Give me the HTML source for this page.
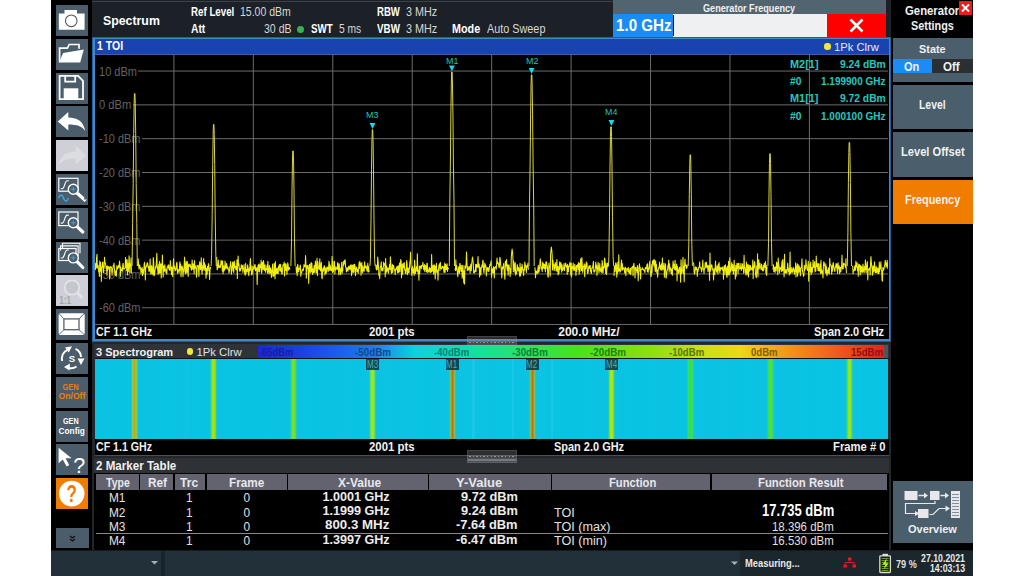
<!DOCTYPE html>
<html><head><meta charset="utf-8"><style>
html,body{margin:0;padding:0;background:#fff;width:1024px;height:576px;overflow:hidden}
body{position:relative;font-family:"Liberation Sans",sans-serif}
.r{position:absolute;overflow:visible}
.t{position:absolute;white-space:pre;transform-origin:0 0;font-family:"Liberation Sans",sans-serif}
svg.r text{font-family:"Liberation Sans",sans-serif}
</style></head><body>
<div class="r" style="left:51px;top:0px;width:922px;height:576px;background:#000;"></div>
<div class="r" style="left:92px;top:0px;width:799px;height:37px;background:#1b2126;"></div>
<div class="r" style="left:92px;top:1px;width:521px;height:1px;background:#3a4448;"></div>
<div class="r" style="left:56px;top:5px;width:32px;height:31px;background:#4b5c6a;"></div>
<div class="r" style="left:56px;top:39px;width:32px;height:31px;background:#4b5c6a;"></div>
<div class="r" style="left:56px;top:73px;width:32px;height:31px;background:#4b5c6a;"></div>
<div class="r" style="left:56px;top:106px;width:32px;height:31px;background:#4b5c6a;"></div>
<div class="r" style="left:56px;top:140px;width:32px;height:31px;background:#cfd0d7;"></div>
<div class="r" style="left:56px;top:174px;width:32px;height:31px;background:#4b5c6a;"></div>
<div class="r" style="left:56px;top:208px;width:32px;height:31px;background:#4b5c6a;"></div>
<div class="r" style="left:56px;top:242px;width:32px;height:31px;background:#4b5c6a;"></div>
<div class="r" style="left:56px;top:275px;width:32px;height:31px;background:#cfd0d7;"></div>
<div class="r" style="left:56px;top:309px;width:32px;height:31px;background:#4b5c6a;"></div>
<div class="r" style="left:56px;top:343px;width:32px;height:31px;background:#4b5c6a;"></div>
<div class="r" style="left:56px;top:377px;width:32px;height:31px;background:#4b5c6a;"></div>
<div class="r" style="left:56px;top:411px;width:32px;height:31px;background:#4b5c6a;"></div>
<div class="r" style="left:56px;top:444px;width:32px;height:31px;background:#4b5c6a;"></div>
<div class="r" style="left:56px;top:478px;width:32px;height:31px;background:#f07c00;"></div>
<div class="r" style="left:56px;top:528px;width:33px;height:20px;background:#4b5c6a;"></div>
<svg class="r" style="left:56px;top:5px" width="32" height="31" viewBox="0 0 32 31"><path d="M8.5 5h12.5v3.5h7.6v16.2H2.8V8.5h5.7z" fill="#fff"/><circle cx="15.25" cy="15.8" r="5.8" fill="none" stroke="#555" stroke-width="1.1"/></svg>
<svg class="r" style="left:56px;top:39px" width="32" height="31" viewBox="0 0 32 31"><path d="M3.6 23.2V9.2h7.8l1.8-3.7h9.8v4.3" fill="none" stroke="#fff" stroke-width="1.7"/><path d="M3 23.6l4.1-9.6 20.7-3.6-3.6 13.2z" fill="#fff"/></svg>
<svg class="r" style="left:56px;top:73px" width="32" height="31" viewBox="0 0 32 31"><path d="M3.6 2.9h18.5l4.9 5v18.2H3.6z" fill="none" stroke="#fff" stroke-width="1.8"/><path d="M9.2 2.9v5.7h10v-5.7" fill="none" stroke="#fff" stroke-width="1.8"/><rect x="7.7" y="15.3" width="14.6" height="11" fill="#fff"/></svg>
<svg class="r" style="left:56px;top:106px" width="32" height="31" viewBox="0 0 32 31"><path d="M1.8 15.5l10.5-9.5v5.5c8 0 15 3 17 13.5-3-4.5-8-6.5-17-6.5v6z" fill="#fff"/></svg>
<svg class="r" style="left:56px;top:140px" width="32" height="31" viewBox="0 0 32 31"><path d="M30.2 15.5l-10.5-9.5v5.5c-8 0-15 3-17 13.5 3-4.5 8-6.5 17-6.5v6z" fill="#dcdde0"/></svg>
<svg class="r" style="left:56px;top:174px" width="32" height="31" viewBox="0 0 32 31"><rect x="2.8" y="4.3" width="19.2" height="12.9" fill="none" stroke="#fff" stroke-width="1.2"/><path d="M4.8 14.8h1.5c2.5 0 2-8 5-8h1.5" fill="none" stroke="#fff" stroke-width="1.1"/><path d="M20.8 18.7L26.8 24.2" stroke="#fff" stroke-width="3.2" stroke-linecap="round"/><circle cx="17.3" cy="15.2" r="5.0" fill="#4b5c6a" stroke="#fff" stroke-width="1.4"/><path d="M17.3 12.7v5M14.8 15.2h5" stroke="#3aa6e0" stroke-width="1"/><path d="M2.5 24c1.7-4 3.5-4 5 0s3.5 4 5 0" fill="none" stroke="#3aa6e0" stroke-width="1.5"/><path d="M26 25.5h5l-2.5 2.5z" fill="#fff"/></svg>
<svg class="r" style="left:56px;top:208px" width="32" height="31" viewBox="0 0 32 31"><rect x="2.8" y="4.0" width="19.2" height="13.6" fill="none" stroke="#fff" stroke-width="1.2"/><path d="M4.8 15.1h1.5c2.5 0 2-8 5-8h1.5" fill="none" stroke="#fff" stroke-width="1.1"/><path d="M20.8 18.3L26.8 24.0" stroke="#fff" stroke-width="3.2" stroke-linecap="round"/><circle cx="17.3" cy="14.8" r="5.0" fill="#4b5c6a" stroke="#fff" stroke-width="1.4"/><path d="M17.3 12.3v5M14.8 14.8h5" stroke="#3aa6e0" stroke-width="1"/></svg>
<svg class="r" style="left:56px;top:242px" width="32" height="31" viewBox="0 0 32 31"><path d="M6.5 6.5V1.3h17.5v10" fill="none" stroke="#fff" stroke-width="1.1"/><path d="M4.6 8.5V3.9h17.5v10" fill="none" stroke="#fff" stroke-width="1.1"/><rect x="2.8" y="6.5" width="17.2" height="12.0" fill="none" stroke="#fff" stroke-width="1.2"/><path d="M4.8 16.0h1.5c2.5 0 2-8 5-8h1.5" fill="none" stroke="#fff" stroke-width="1.1"/><path d="M20.8 19.4L26.8 25.5" stroke="#fff" stroke-width="3.2" stroke-linecap="round"/><circle cx="17.3" cy="15.9" r="5.0" fill="#4b5c6a" stroke="#fff" stroke-width="1.4"/><path d="M17.3 13.4v5M14.8 15.9h5" stroke="#3aa6e0" stroke-width="1"/></svg>
<svg class="r" style="left:56px;top:275px" width="32" height="31" viewBox="0 0 32 31"><circle cx="16" cy="12.5" r="7.2" fill="#c6c7ce" stroke="#e2e3e8" stroke-width="1.8"/><path d="M21 17.5l5.5 5.5" stroke="#e2e3e8" stroke-width="3"/><text x="3.2" y="28.5" textLength="11.8" lengthAdjust="spacingAndGlyphs" font-family="Liberation Sans" font-weight="bold" font-size="10.5" fill="#a4a5ac">1:1</text></svg>
<svg class="r" style="left:56px;top:309px" width="32" height="31" viewBox="0 0 32 31"><rect x="2.6" y="4.25" width="26.1" height="21.75" rx="2" fill="#fff"/><rect x="7.9" y="9.9" width="15.1" height="10.8" fill="#fff" stroke="#56626c" stroke-width="1.3"/><path d="M3.5 5l4.4 4.9M27.8 5l-4.8 4.9M3.5 25.2l4.4-4.5M27.8 25.2l-4.8-4.5" stroke="#56626c" stroke-width="0.9"/></svg>
<svg class="r" style="left:56px;top:343px" width="32" height="31" viewBox="0 0 32 31"><path d="M6.2 18A9.5 9.5 0 0 1 11.5 6.8" fill="none" stroke="#fff" stroke-width="2"/><path d="M9 4.5l7-1.2-3.2 6.2z" fill="#fff"/><path d="M19.5 5.8A9.5 9.5 0 0 1 25 14" fill="none" stroke="#fff" stroke-width="2"/><path d="M21.5 15.5h7l-3.5 6.5z" fill="#fff"/><path d="M20.5 23.5A9.5 9.5 0 0 1 13 25" fill="none" stroke="#fff" stroke-width="2"/><path d="M14 20.5l-0.5 7-5.5-3.5z" fill="#fff"/><text x="15.8" y="19.3" text-anchor="middle" font-family="Liberation Sans" font-weight="bold" font-size="9.5" fill="#fff">S</text></svg>
<svg class="r" style="left:56px;top:377px" width="32" height="31" viewBox="0 0 32 31"><text x="6.4" y="12.9" textLength="16.2" lengthAdjust="spacingAndGlyphs" font-family="Liberation Sans" font-weight="bold" font-size="8.8" fill="#f07c00">GEN</text><text x="2.6" y="22.4" textLength="26.7" lengthAdjust="spacingAndGlyphs" font-family="Liberation Sans" font-weight="bold" font-size="8.4" fill="#f07c00">On/Off</text></svg>
<svg class="r" style="left:56px;top:411px" width="32" height="31" viewBox="0 0 32 31"><text x="7" y="12.9" textLength="15.6" lengthAdjust="spacingAndGlyphs" font-family="Liberation Sans" font-weight="bold" font-size="9.4" fill="#fff">GEN</text><text x="2.6" y="23.4" textLength="26.2" lengthAdjust="spacingAndGlyphs" font-family="Liberation Sans" font-weight="bold" font-size="9.4" fill="#fff">Config</text></svg>
<svg class="r" style="left:56px;top:444px" width="32" height="31" viewBox="0 0 32 31"><path d="M2.6 3.7v15.5l4.2-3.8 3.8 7 2.6-1.4-3.6-6.8h6z" fill="#fff"/><text x="17.3" y="28.6" textLength="12" lengthAdjust="spacingAndGlyphs" font-family="Liberation Sans" font-size="22" fill="#fff">?</text></svg>
<svg class="r" style="left:56px;top:478px" width="32" height="31" viewBox="0 0 32 31"><circle cx="15.7" cy="15.6" r="12.8" fill="#fff"/><text x="10.5" y="24.3" textLength="10.4" lengthAdjust="spacingAndGlyphs" font-family="Liberation Sans" font-weight="bold" font-size="23.5" fill="#f07c00">?</text></svg>
<svg class="r" style="left:56px;top:528px" width="33" height="20" viewBox="0 0 33 20"><path d="M14 8l2.5 2 2.5-2M14 11l2.5 2 2.5-2" fill="none" stroke="#111" stroke-width="1.3"/></svg>
<div class="t" style="left:102.70px;top:15px;font-size:12.46px;line-height:12.46px;color:#ffffff;font-weight:bold;transform:scaleX(0.990);">Spectrum</div>
<div class="t" style="left:190.80px;top:6px;font-size:12.46px;line-height:12.46px;color:#ffffff;font-weight:bold;transform:scaleX(0.782);">Ref Level</div>
<div class="t" style="left:240.40px;top:6px;font-size:12.46px;line-height:12.46px;color:#d8d8d8;transform:scaleX(0.843);">15.00 dBm</div>
<div class="t" style="left:190.80px;top:24px;font-size:11.88px;line-height:11.88px;color:#ffffff;font-weight:bold;transform:scaleX(0.866);">Att</div>
<div class="t" style="left:263.70px;top:24px;font-size:11.88px;line-height:11.88px;color:#d8d8d8;transform:scaleX(0.886);">30 dB</div>
<div class="r" style="left:297px;top:25.5px;width:7px;height:7px;border-radius:50%;background:#3cae55"></div>
<div class="t" style="left:310.50px;top:24px;font-size:11.88px;line-height:11.88px;color:#ffffff;font-weight:bold;transform:scaleX(0.821);">SWT</div>
<div class="t" style="left:338.90px;top:24px;font-size:11.88px;line-height:11.88px;color:#d8d8d8;transform:scaleX(0.863);">5 ms</div>
<div class="t" style="left:376.60px;top:6px;font-size:12.46px;line-height:12.46px;color:#ffffff;font-weight:bold;transform:scaleX(0.770);">RBW</div>
<div class="t" style="left:405.90px;top:6px;font-size:12.46px;line-height:12.46px;color:#d8d8d8;transform:scaleX(0.869);">3 MHz</div>
<div class="t" style="left:376.60px;top:24px;font-size:11.88px;line-height:11.88px;color:#ffffff;font-weight:bold;transform:scaleX(0.826);">VBW</div>
<div class="t" style="left:405.90px;top:24px;font-size:11.88px;line-height:11.88px;color:#d8d8d8;transform:scaleX(0.912);">3 MHz</div>
<div class="t" style="left:452.00px;top:24px;font-size:11.88px;line-height:11.88px;color:#ffffff;font-weight:bold;transform:scaleX(0.909);">Mode</div>
<div class="t" style="left:486.50px;top:24px;font-size:11.88px;line-height:11.88px;color:#d8d8d8;transform:scaleX(0.912);">Auto Sweep</div>
<div class="r" style="left:613px;top:0px;width:273px;height:14px;background:#526470;"></div>
<div class="t" style="left:703.00px;top:4px;font-size:10.14px;line-height:10.14px;color:#f0f0f0;font-weight:bold;transform:scaleX(0.900);">Generator Frequency</div>
<div class="r" style="left:613px;top:14px;width:214px;height:23px;background:#eef0f2;"></div>
<div class="r" style="left:613px;top:14px;width:60px;height:23px;background:#1a8cf5;"></div>
<div class="r" style="left:672.5px;top:15px;width:1.5px;height:21px;background:#000;"></div>
<div class="t" style="left:615.60px;top:18px;font-size:15.94px;line-height:15.94px;color:#ffffff;font-weight:bold;transform:scaleX(0.950);">1.0 GHz</div>
<div class="r" style="left:827px;top:14px;width:59px;height:23px;background:#ff0000;"></div>
<svg class="r" style="left:827px;top:14px" width="59" height="23" viewBox="0 0 59 23"><path d="M23.5 5.5l12 12M35.5 5.5l-12 12" stroke="#fff" stroke-width="2.6"/></svg>
<div class="t" style="left:905.00px;top:5px;font-size:12.46px;line-height:12.46px;color:#f0f0f0;font-weight:bold;transform:scaleX(0.911);">Generator</div>
<div class="t" style="left:910.60px;top:20px;font-size:12.75px;line-height:12.75px;color:#f0f0f0;font-weight:bold;transform:scaleX(0.852);">Settings</div>
<div class="r" style="left:959px;top:1px;width:13px;height:14px;background:#ee1c1c;"></div>
<svg class="r" style="left:959px;top:1px" width="13" height="14" viewBox="0 0 13 14"><path d="M3 3.5l7 7M10 3.5l-7 7" stroke="#fff" stroke-width="1.8"/></svg>
<div class="r" style="left:893px;top:38px;width:80px;height:44px;background:#4a5e6c;"></div>
<div class="t" style="left:919.00px;top:44px;font-size:11.30px;line-height:11.30px;color:#f0f0f0;font-weight:bold;transform:scaleX(0.964);">State</div>
<div class="r" style="left:893px;top:59px;width:39px;height:14px;background:#1a8cf5;"></div>
<div class="r" style="left:932px;top:59px;width:41px;height:14px;background:#2a2f34;"></div>
<div class="t" style="left:904.30px;top:61px;font-size:12.32px;line-height:12.32px;color:#f0f0f0;font-weight:bold;transform:scaleX(0.895);">On</div>
<div class="t" style="left:943.40px;top:61px;font-size:12.32px;line-height:12.32px;color:#f0f0f0;font-weight:bold;transform:scaleX(0.939);">Off</div>
<div class="r" style="left:893px;top:85px;width:80px;height:44px;background:#4a5e6c;"></div>
<div class="t" style="left:919.00px;top:99px;font-size:12.61px;line-height:12.61px;color:#f0f0f0;font-weight:bold;transform:scaleX(0.826);">Level</div>
<div class="r" style="left:893px;top:132px;width:80px;height:45px;background:#4a5e6c;"></div>
<div class="t" style="left:900.80px;top:146px;font-size:12.32px;line-height:12.32px;color:#f0f0f0;font-weight:bold;transform:scaleX(0.903);">Level Offset</div>
<div class="r" style="left:893px;top:180px;width:80px;height:44px;background:#f07c00;"></div>
<div class="t" style="left:905.00px;top:194px;font-size:12.17px;line-height:12.17px;color:#f8f0e8;font-weight:bold;transform:scaleX(0.899);">Frequency</div>
<div class="r" style="left:893px;top:481px;width:80px;height:62px;background:#4a5e6c;"></div>
<div class="t" style="left:908.00px;top:524px;font-size:11.30px;line-height:11.30px;color:#f0f0f0;font-weight:bold;transform:scaleX(0.972);">Overview</div>
<svg class="r" style="left:893px;top:481px" width="80" height="62" viewBox="0 0 80 62">
<rect x="11.5" y="10" width="13" height="9" fill="#e8e8ec"/>
<path d="M25.5 14.5h7" stroke="#e8e8ec" stroke-width="1.5"/><path d="M31 11.5l4 3-4 3z" fill="#e8e8ec"/>
<rect x="37" y="10" width="9.5" height="9" fill="#e8e8ec"/>
<path d="M47.5 14.5h6" stroke="#e8e8ec" stroke-width="1.5"/><path d="M52 11.5l4 3-4 3z" fill="#e8e8ec"/>
<rect x="58" y="10" width="9" height="27" fill="#e8e8ec"/>
<path d="M59 13.5h7M59 16.5h7M59 19.5h7M59 22.5h7M59 25.5h7M59 28.5h7M59 31.5h7M59 34.5h7" stroke="#6a7680" stroke-width="0.8"/>
<path d="M42 20v2.5H12.5v10h10" fill="none" stroke="#e8e8ec" stroke-width="1.2"/><path d="M22 30l4.5 2.5-4.5 2.5z" fill="#e8e8ec"/>
<rect x="25" y="28" width="10.5" height="9" fill="#e8e8ec"/>
<path d="M36.5 33.5h3.5l6-6h7.5" fill="none" stroke="#e8e8ec" stroke-width="1.2"/><path d="M52.5 24.5l4.5 3-4.5 3z" fill="#e8e8ec"/>
</svg>
<div class="r" style="left:51px;top:550px;width:922px;height:26px;background:#22303a;"></div>
<div class="r" style="left:161px;top:550px;width:4px;height:26px;background:#18232a;"></div>
<div class="r" style="left:740px;top:550px;width:233px;height:26px;background:#1c262d;"></div>
<div class="r" style="left:51px;top:550px;width:922px;height:1px;background:#141a1e;"></div>
<svg class="r" style="left:150px;top:559px" width="10" height="8"><path d="M1 2h7l-3.5 3.5z" fill="#aab0b5"/></svg>
<svg class="r" style="left:729.5px;top:560px" width="10" height="8"><path d="M1 1.5h7l-3.5 3.5z" fill="#aab0b5"/></svg>
<div class="t" style="left:744.80px;top:559px;font-size:10.43px;line-height:10.43px;color:#e8e8e8;font-weight:bold;transform:scaleX(0.898);">Measuring...</div>
<svg class="r" style="left:842px;top:556px" width="16" height="13" viewBox="0 0 16 13">
<rect x="6" y="1.5" width="3.5" height="3" fill="#e81818"/><rect x="1.5" y="8.5" width="3.5" height="3" fill="#e81818"/><rect x="10.5" y="8.5" width="3.5" height="3" fill="#e81818"/>
<path d="M7.75 4.5v2M3.25 8.5V6.5h9v2" fill="none" stroke="#e81818" stroke-width="1"/></svg>
<svg class="r" style="left:878px;top:553px" width="14" height="21" viewBox="0 0 14 21">
<rect x="4.5" y="0.8" width="5.5" height="2.2" fill="#e0e0e0"/>
<rect x="1.8" y="2.9" width="10.6" height="16.6" rx="0.8" fill="#14200c" stroke="#d8d8d8" stroke-width="1.3"/>
<path d="M3.5 5.5h7M3.5 7.5h7M3.5 9.5h7M3.5 11.5h7M3.5 13.5h7M3.5 15.5h7M3.5 17.5h7" stroke="#5a9a18" stroke-width="1.1"/>
<path d="M8.8 5.2l-4.3 6.3h2.8l-1.6 5.3 4.8-6.6h-2.9z" fill="#c0f030"/></svg>
<div class="t" style="left:896.00px;top:559px;font-size:10.87px;line-height:10.87px;color:#e0e0e0;font-weight:bold;transform:scaleX(0.837);">79 %</div>
<div class="t" style="left:921.00px;top:554px;font-size:10.14px;line-height:10.14px;color:#e8e8e8;font-weight:bold;transform:scaleX(0.866);">27.10.2021</div>
<div class="t" style="left:930.30px;top:564px;font-size:10.00px;line-height:10.00px;color:#e8e8e8;font-weight:bold;transform:scaleX(0.876);">14:03:13</div>
<div class="r" style="left:92px;top:37px;width:799px;height:305px;background:#2060a0;"></div>
<div class="r" style="left:93px;top:38px;width:797px;height:303px;background:#4288c8;"></div>
<div class="r" style="left:95px;top:39px;width:794px;height:15px;background:#1a43b2;"></div>
<div class="r" style="left:95px;top:53.6px;width:794px;height:1px;background:#4a5aa0;"></div>
<div class="r" style="left:95px;top:54.6px;width:794px;height:284px;background:#000;"></div>
<div class="t" style="left:97.20px;top:40px;font-size:12.75px;line-height:12.75px;color:#ffffff;font-weight:bold;transform:scaleX(0.825);">1 TOI</div>
<div class="r" style="left:824px;top:43.4px;width:6.5px;height:6.5px;border-radius:50%;background:#f2e83a"></div>
<div class="t" style="left:833.60px;top:42px;font-size:10.72px;line-height:10.72px;color:#e8e8f0;transform:scaleX(1.047);">1Pk Clrw</div>
<svg class="r" style="left:0;top:0" width="1024" height="576" viewBox="0 0 1024 576"><path d="M95.0 71.04H888.0" stroke="#6c6c6c" stroke-width="1"/><path d="M95.0 104.86H888.0" stroke="#6c6c6c" stroke-width="1"/><path d="M95.0 138.68H888.0" stroke="#6c6c6c" stroke-width="1"/><path d="M95.0 172.50H888.0" stroke="#6c6c6c" stroke-width="1"/><path d="M95.0 206.32H888.0" stroke="#6c6c6c" stroke-width="1"/><path d="M95.0 240.14H888.0" stroke="#6c6c6c" stroke-width="1"/><path d="M95.0 273.96H888.0" stroke="#6c6c6c" stroke-width="1"/><path d="M95.0 307.78H888.0" stroke="#6c6c6c" stroke-width="1"/><path d="M95.0 324.45H888.0" stroke="#6c6c6c" stroke-width="1"/><path d="M173.90 54.1V324.5" stroke="#6c6c6c" stroke-width="1"/><path d="M253.34 54.1V324.5" stroke="#6c6c6c" stroke-width="1"/><path d="M332.78 54.1V324.5" stroke="#6c6c6c" stroke-width="1"/><path d="M412.22 54.1V324.5" stroke="#6c6c6c" stroke-width="1"/><path d="M491.66 54.1V324.5" stroke="#6c6c6c" stroke-width="1"/><path d="M571.10 54.1V324.5" stroke="#6c6c6c" stroke-width="1"/><path d="M650.54 54.1V324.5" stroke="#6c6c6c" stroke-width="1"/><path d="M729.98 54.1V324.5" stroke="#6c6c6c" stroke-width="1"/><path d="M809.42 54.1V324.5" stroke="#6c6c6c" stroke-width="1"/></svg>
<div class="r" style="left:95px;top:66px;width:43px;height:10px;background:#000;"></div>
<div class="t" style="left:98.90px;top:65px;font-size:13.04px;line-height:13.04px;color:#626262;transform:scaleX(0.846);">10 dBm</div>
<div class="r" style="left:95px;top:100px;width:38px;height:10px;background:#000;"></div>
<div class="t" style="left:98.90px;top:98px;font-size:13.04px;line-height:13.04px;color:#626262;transform:scaleX(0.859);">0 dBm</div>
<div class="r" style="left:95px;top:134px;width:47px;height:10px;background:#000;"></div>
<div class="t" style="left:98.90px;top:132px;font-size:13.04px;line-height:13.04px;color:#626262;transform:scaleX(0.841);">-10 dBm</div>
<div class="r" style="left:95px;top:167px;width:47px;height:10px;background:#000;"></div>
<div class="t" style="left:98.90px;top:166px;font-size:13.04px;line-height:13.04px;color:#626262;transform:scaleX(0.841);">-20 dBm</div>
<div class="r" style="left:95px;top:201px;width:47px;height:10px;background:#000;"></div>
<div class="t" style="left:98.90px;top:200px;font-size:13.04px;line-height:13.04px;color:#626262;transform:scaleX(0.841);">-30 dBm</div>
<div class="r" style="left:95px;top:235px;width:47px;height:10px;background:#000;"></div>
<div class="t" style="left:98.90px;top:234px;font-size:13.04px;line-height:13.04px;color:#626262;transform:scaleX(0.841);">-40 dBm</div>
<div class="r" style="left:95px;top:269px;width:47px;height:10px;background:#000;"></div>
<div class="t" style="left:98.90px;top:268px;font-size:13.04px;line-height:13.04px;color:#626262;transform:scaleX(0.841);">-50 dBm</div>
<div class="r" style="left:95px;top:303px;width:47px;height:10px;background:#000;"></div>
<div class="t" style="left:98.90px;top:301px;font-size:13.04px;line-height:13.04px;color:#626262;transform:scaleX(0.841);">-60 dBm</div>
<svg class="r" style="left:0;top:0" width="1024" height="576" viewBox="0 0 1024 576"><clipPath id="dc"><rect x="95" y="54.5" width="793" height="270"/></clipPath><g clip-path="url(#dc)" fill="none" stroke-linejoin="round"><g stroke="#f0ee10" stroke-width="1.05"><polyline points="95.00,263.40 95.40,269.81 95.79,262.98 96.19,268.04 96.59,257.62 96.98,254.27 97.38,267.89 97.78,267.20 98.17,265.16 98.57,271.45 98.97,270.72 99.36,276.50 99.76,261.14 100.15,271.11 100.55,262.40 100.95,268.31 101.34,281.50 101.74,268.11 102.14,267.15 102.53,262.35 102.93,262.02 103.33,272.84 103.72,268.38 104.12,268.19 104.52,257.28 104.91,262.63 105.31,262.87 105.71,265.18 106.10,268.40 106.50,266.30 106.89,274.94 107.29,270.93 107.69,265.84 108.08,269.14 108.48,267.07 108.88,266.74 109.27,266.98 109.67,278.86 110.07,270.36 110.46,266.48 110.86,267.14 111.26,266.87 111.65,267.94 112.05,275.18 112.45,269.86 112.84,269.07 113.24,265.20 113.64,266.01 114.03,263.10 114.43,268.83 114.83,273.26 115.22,275.51 115.62,270.72 116.01,274.40 116.41,276.17 116.81,265.75 117.20,269.19 117.60,268.98 118.00,267.43 118.39,265.34 118.79,267.63 119.19,265.32 119.58,261.01 119.98,265.45 120.38,276.53 120.77,266.96 121.17,270.61 121.57,269.22 121.96,270.87 122.36,271.09 122.75,264.91 123.15,263.19 123.55,269.04 123.94,268.47 124.34,269.11 124.74,268.11 125.13,267.87 125.53,257.54 125.93,267.60 126.32,259.74 126.72,270.68 127.12,259.74 127.51,274.88 127.91,263.58 128.31,271.71 128.70,264.35 129.10,255.71 129.50,265.58 129.89,273.00 130.29,263.87 130.69,264.53 131.08,257.70 131.48,273.63"/><polyline points="137.82,265.94 138.22,258.80 138.62,265.24 139.01,269.28 139.41,265.01 139.80,264.98 140.20,268.47 140.60,267.81 140.99,274.37 141.39,269.92 141.79,268.50 142.18,267.54 142.58,275.74 142.98,269.46 143.37,273.69 143.77,269.94 144.17,264.22 144.56,262.29 144.96,269.72 145.36,279.92 145.75,267.74 146.15,265.85 146.55,266.72 146.94,263.71 147.34,262.74 147.73,263.10 148.13,267.94 148.53,266.22 148.92,271.58 149.32,266.21 149.72,271.08 150.11,259.10 150.51,270.09 150.91,274.44 151.30,267.74 151.70,265.59 152.10,273.21 152.49,267.60 152.89,274.95 153.29,257.44 153.68,261.80 154.08,275.84 154.47,274.90 154.87,271.11 155.27,268.82 155.66,266.16 156.06,267.03 156.46,260.75 156.85,253.22 157.25,268.75 157.65,266.69 158.04,274.56 158.44,271.14 158.84,264.04 159.23,273.14 159.63,261.20 160.03,273.08 160.42,267.34 160.82,263.69 161.22,278.03 161.61,264.27 162.01,267.89 162.41,254.95 162.80,268.64 163.20,277.04 163.59,265.87 163.99,271.28 164.39,271.35 164.78,264.84 165.18,268.81 165.58,270.18 165.97,272.71 166.37,269.17 166.77,274.33 167.16,266.93 167.56,267.01 167.96,265.27 168.35,268.10 168.75,264.72 169.15,269.80 169.54,269.75 169.94,270.58 170.33,260.63 170.73,266.86 171.13,269.01 171.52,274.83 171.92,266.90 172.32,271.49 172.71,276.66 173.11,268.21 173.51,258.85 173.90,265.23 174.30,268.82 174.70,266.29 175.09,270.96 175.49,268.60 175.89,270.24 176.28,267.91 176.68,262.22 177.08,263.56 177.47,273.23 177.87,269.48 178.26,269.85 178.66,270.33 179.06,273.06 179.45,267.74 179.85,261.69 180.25,269.91 180.64,264.08 181.04,276.80 181.44,269.71 181.83,266.20 182.23,266.12 182.63,269.78 183.02,276.72 183.42,269.12 183.82,271.91 184.21,263.97 184.61,256.91 185.01,267.99 185.40,273.91 185.80,264.81 186.19,261.23 186.59,273.06 186.99,269.04 187.38,261.53 187.78,271.60 188.18,276.36 188.57,264.70 188.97,264.02 189.37,266.47 189.76,265.16 190.16,264.41 190.56,267.48 190.95,266.26 191.35,270.15 191.75,268.08 192.14,260.05 192.54,267.01 192.94,269.58 193.33,263.77 193.73,266.83 194.12,274.00 194.52,260.54 194.92,268.37 195.31,267.09 195.71,265.90 196.11,268.73 196.50,277.30 196.90,271.77 197.30,265.18 197.69,266.10 198.09,265.27 198.49,267.09 198.88,276.38 199.28,268.56 199.68,261.72 200.07,263.81 200.47,269.77 200.87,267.77 201.26,257.65 201.66,269.81 202.06,274.22 202.45,265.84 202.85,270.51 203.24,263.33 203.64,258.54 204.04,269.04 204.43,262.74 204.83,270.39 205.23,264.67 205.62,266.24 206.02,278.18 206.42,268.15 206.81,274.68 207.21,273.84 207.61,266.28 208.00,270.76 208.40,263.55 208.80,265.21 209.19,268.37 209.59,279.47 209.99,269.67 210.38,268.65 210.78,266.97"/><polyline points="216.73,257.03 217.12,269.77 217.52,269.09 217.92,266.97 218.31,259.92 218.71,267.43 219.10,266.89 219.50,267.18 219.90,265.24 220.29,267.73 220.69,264.52 221.09,260.18 221.48,264.52 221.88,261.63 222.28,271.04 222.67,260.75 223.07,273.81 223.47,265.84 223.86,271.21 224.26,266.30 224.66,270.01 225.05,260.93 225.45,266.38 225.84,268.76 226.24,267.67 226.64,263.32 227.03,266.88 227.43,268.79 227.83,266.93 228.22,269.73 228.62,269.13 229.02,273.19 229.41,271.18 229.81,266.52 230.21,265.88 230.60,261.56 231.00,267.38 231.40,274.16 231.79,267.12 232.19,267.16 232.59,262.13 232.98,271.03 233.38,263.04 233.78,272.51 234.17,261.05 234.57,262.08 234.96,267.36 235.36,266.33 235.76,269.38 236.15,266.58 236.55,270.01 236.95,259.69 237.34,278.51 237.74,264.16 238.14,256.00 238.53,265.49 238.93,263.88 239.33,268.90 239.72,271.17 240.12,268.72 240.52,270.82 240.91,268.46 241.31,264.85 241.71,265.22 242.10,268.70 242.50,265.55 242.89,272.52 243.29,268.53 243.69,269.56 244.08,264.63 244.48,271.54 244.88,274.14 245.27,275.25 245.67,263.36 246.07,273.46 246.46,269.59 246.86,270.25 247.26,271.58 247.65,264.77 248.05,267.79 248.45,273.22 248.84,275.72 249.24,268.36 249.63,271.06 250.03,262.99 250.43,258.51 250.82,270.25 251.22,265.97 251.62,274.96 252.01,274.60 252.41,272.35 252.81,265.99 253.20,267.92 253.60,267.71 254.00,269.78 254.39,267.48 254.79,264.61 255.19,264.80 255.58,271.05 255.98,267.94 256.38,267.78 256.77,268.71 257.17,284.38 257.56,269.13 257.96,265.71 258.36,264.75 258.75,271.80 259.15,263.68 259.55,272.02 259.94,267.88 260.34,264.75 260.74,267.71 261.13,259.91 261.53,273.29 261.93,271.66 262.32,262.07 262.72,267.33 263.12,269.44 263.51,260.49 263.91,264.01 264.31,270.42 264.70,270.01 265.10,264.74 265.50,272.33 265.89,268.69 266.29,269.75 266.68,268.92 267.08,265.12 267.48,273.15 267.87,261.26 268.27,267.89 268.67,272.02 269.06,274.02 269.46,265.47 269.86,272.07 270.25,273.10 270.65,267.90 271.05,271.44 271.44,277.41 271.84,270.90 272.24,269.80 272.63,263.91 273.03,276.39 273.43,275.97 273.82,275.88 274.22,263.36 274.61,266.92 275.01,278.78 275.41,261.58 275.80,273.66 276.20,273.50 276.60,268.60 276.99,273.51 277.39,272.04 277.79,267.83 278.18,273.74 278.58,266.12 278.98,268.00 279.37,264.39 279.77,270.95 280.17,268.57 280.56,264.37 280.96,271.70 281.36,267.86 281.75,273.46 282.15,274.10 282.54,269.71 282.94,264.66 283.34,265.65 283.73,265.79 284.13,262.05 284.53,275.93 284.92,268.04 285.32,263.57 285.72,270.38 286.11,264.10 286.51,267.63 286.91,274.36 287.30,270.47 287.70,262.84 288.10,264.46 288.49,270.17 288.89,269.18 289.28,267.26 289.68,269.09 290.08,268.53"/><polyline points="296.03,266.26 296.42,272.78 296.82,267.66 297.22,275.84 297.61,264.32 298.01,265.55 298.40,271.89 298.80,270.99 299.20,268.22 299.59,269.23 299.99,267.42 300.39,264.99 300.78,276.23 301.18,272.39 301.58,272.93 301.97,270.80 302.37,269.65 302.77,269.13 303.16,270.69 303.56,269.27 303.96,264.56 304.35,265.86 304.75,266.76 305.14,266.70 305.54,255.61 305.94,263.74 306.33,278.29 306.73,267.65 307.13,265.56 307.52,268.41 307.92,265.30 308.32,271.62 308.71,283.39 309.11,268.31 309.51,264.36 309.90,270.47 310.30,272.91 310.70,264.49 311.09,262.44 311.49,271.73 311.89,263.29 312.28,271.50 312.68,274.48 313.07,268.70 313.47,272.59 313.87,269.05 314.26,265.46 314.66,272.36 315.06,266.03 315.45,261.01 315.85,264.72 316.25,272.95 316.64,268.82 317.04,258.27 317.44,275.44 317.83,261.48 318.23,266.40 318.63,267.86 319.02,269.39 319.42,265.20 319.82,258.88 320.21,269.75 320.61,271.00 321.00,265.26 321.40,262.16 321.80,277.96 322.19,278.68 322.59,270.53 322.99,268.11 323.38,271.18 323.78,269.02 324.18,265.67 324.57,266.19 324.97,275.09 325.37,268.13 325.76,268.20 326.16,273.37 326.56,271.77 326.95,266.73 327.35,267.43 327.75,267.57 328.14,271.72 328.54,269.62 328.94,261.27 329.33,263.80 329.73,270.46 330.12,265.03 330.52,266.84 330.92,270.39 331.31,269.10 331.71,270.96 332.11,256.33 332.50,272.43 332.90,261.26 333.30,272.07 333.69,268.18 334.09,269.07 334.49,261.20 334.88,273.95 335.28,266.82 335.68,270.07 336.07,268.93 336.47,268.17 336.87,267.05 337.26,269.41 337.66,262.56 338.05,263.50 338.45,270.51 338.85,275.07 339.24,263.85 339.64,270.60 340.04,267.88 340.43,274.72 340.83,269.21 341.23,271.41 341.62,262.23 342.02,273.55 342.42,270.90 342.81,270.61 343.21,261.64 343.61,265.37 344.00,264.00 344.40,260.43 344.79,263.31 345.19,259.67 345.59,267.13 345.98,267.02 346.38,271.96 346.78,269.75 347.17,267.86 347.57,270.61 347.97,271.26 348.36,267.37 348.76,266.28 349.16,269.37 349.55,269.17 349.95,266.26 350.35,265.08 350.74,269.87 351.14,264.82 351.54,275.42 351.93,272.32 352.33,265.05 352.73,270.06 353.12,272.44 353.52,264.89 353.91,272.28 354.31,264.42 354.71,264.30 355.10,267.07 355.50,275.72 355.90,269.24 356.29,267.70 356.69,266.94 357.09,271.83 357.48,269.32 357.88,270.99 358.28,273.31 358.67,268.33 359.07,262.51 359.47,268.53 359.86,261.30 360.26,265.49 360.65,263.54 361.05,275.15 361.45,266.25 361.84,262.56 362.24,271.30 362.64,273.00 363.03,266.06 363.43,270.70 363.83,268.55 364.22,271.32 364.62,261.82 365.02,268.12 365.41,267.75 365.81,266.42 366.21,265.93 366.60,268.59 367.00,271.19 367.40,269.31 367.79,263.35 368.19,272.27 368.58,266.63 368.98,271.49 369.38,270.75"/><polyline points="375.72,264.45 376.12,268.71 376.51,270.03 376.91,265.53 377.31,269.39 377.70,257.09 378.10,261.42 378.50,266.26 378.89,275.58 379.29,274.11 379.69,278.83 380.08,270.73 380.48,266.04 380.88,266.03 381.27,261.85 381.67,270.62 382.07,267.71 382.46,269.81 382.86,270.99 383.26,268.25 383.65,262.06 384.05,264.71 384.44,265.21 384.84,263.64 385.24,276.78 385.63,258.63 386.03,273.09 386.43,265.84 386.82,271.66 387.22,270.01 387.62,267.72 388.01,268.25 388.41,273.18 388.81,268.64 389.20,267.93 389.60,264.28 390.00,269.60 390.39,256.69 390.79,263.19 391.19,271.90 391.58,273.49 391.98,269.07 392.38,264.31 392.77,272.58 393.17,265.88 393.56,265.45 393.96,267.53 394.36,269.90 394.75,269.89 395.15,274.70 395.55,269.13 395.94,270.00 396.34,267.80 396.74,268.53 397.13,266.14 397.53,272.77 397.93,270.87 398.32,265.90 398.72,272.53 399.12,267.97 399.51,263.05 399.91,271.71 400.31,264.01 400.70,259.58 401.10,260.77 401.49,277.74 401.89,264.16 402.29,272.28 402.68,274.30 403.08,263.19 403.48,266.51 403.87,267.49 404.27,262.63 404.67,270.02 405.06,268.98 405.46,273.68 405.86,273.81 406.25,269.43 406.65,260.62 407.05,263.11 407.44,274.84 407.84,268.01 408.24,272.35 408.63,268.03 409.03,272.94 409.42,268.01 409.82,262.72 410.22,260.70 410.61,252.00 411.01,267.37 411.41,268.27 411.80,275.56 412.20,270.05 412.60,266.32 412.99,272.86 413.39,270.57 413.79,268.67 414.18,275.47 414.58,260.02 414.98,265.65 415.37,273.50 415.77,269.67 416.17,269.31 416.56,266.57 416.96,271.54 417.35,253.87 417.75,269.81 418.15,273.73 418.54,270.24 418.94,280.29 419.34,266.05 419.73,273.47 420.13,267.44 420.53,265.92 420.92,266.24 421.32,268.74 421.72,265.40 422.11,265.90 422.51,265.96 422.91,262.20 423.30,266.41 423.70,269.53 424.10,270.05 424.49,264.59 424.89,271.74 425.28,266.98 425.68,265.42 426.08,266.74 426.47,271.97 426.87,263.54 427.27,263.28 427.66,272.58 428.06,272.13 428.46,269.94 428.85,271.50 429.25,267.36 429.65,268.44 430.04,272.42 430.44,268.26 430.84,272.48 431.23,271.45 431.63,254.60 432.02,271.53 432.42,270.30 432.82,266.51 433.21,265.09 433.61,273.90 434.01,269.12 434.40,264.90 434.80,269.06 435.20,279.06 435.59,266.28 435.99,271.05 436.39,263.20 436.78,272.37 437.18,270.11 437.58,270.71 437.97,280.16 438.37,270.80 438.77,266.43 439.16,264.99 439.56,263.80 439.95,270.73 440.35,262.29 440.75,267.60 441.14,268.44 441.54,269.00 441.94,267.76 442.33,266.40 442.73,267.89 443.13,266.24 443.52,268.21 443.92,272.37 444.32,270.83 444.71,263.08 445.11,272.43 445.51,264.16 445.90,266.72 446.30,269.67 446.70,266.42 447.09,263.72 447.49,271.35 447.88,267.80 448.28,268.60 448.68,267.68"/><polyline points="455.02,268.37 455.42,270.63 455.81,259.77 456.21,269.97 456.61,265.42 457.00,268.59 457.40,272.38 457.80,276.68 458.19,272.00 458.59,267.37 458.99,266.57 459.38,273.50 459.78,263.48 460.18,263.81 460.57,268.26 460.97,271.47 461.37,270.89 461.76,265.17 462.16,278.19 462.56,274.19 462.95,265.26 463.35,275.05 463.75,283.04 464.14,270.67 464.54,283.96 464.93,265.78 465.33,267.93 465.73,268.10 466.12,263.39 466.52,252.00 466.92,262.09 467.31,270.74 467.71,266.45 468.11,269.07 468.50,270.09 468.90,269.16 469.30,266.43 469.69,267.72 470.09,273.21 470.49,266.83 470.88,264.03 471.28,270.83 471.68,265.00 472.07,260.00 472.47,257.00 472.86,260.00 473.26,263.00 473.66,272.79 474.05,270.96 474.45,272.90 474.85,270.21 475.24,271.48 475.64,264.30 476.04,271.67 476.43,264.34 476.83,266.00 477.23,267.35 477.62,265.54 478.02,256.60 478.42,266.90 478.81,267.41 479.21,264.13 479.61,276.97 480.00,266.97 480.40,269.08 480.79,274.94 481.19,268.91 481.59,267.43 481.98,264.89 482.38,267.16 482.78,260.26 483.17,261.09 483.57,269.85 483.97,273.00 484.36,268.79 484.76,263.04 485.16,266.88 485.55,264.77 485.95,266.29 486.35,275.94 486.74,268.30 487.14,269.11 487.54,267.48 487.93,271.24 488.33,267.84 488.72,271.54 489.12,269.96 489.52,266.62 489.91,264.43 490.31,265.12 490.71,263.49 491.10,260.72 491.50,277.15 491.90,271.45 492.29,268.76 492.69,272.67 493.09,272.75 493.48,266.65 493.88,269.39 494.28,278.03 494.67,267.45 495.07,267.01 495.46,266.45 495.86,267.49 496.26,269.29 496.65,263.10 497.05,258.01 497.45,263.38 497.84,262.19 498.24,263.56 498.64,264.61 499.03,267.68 499.43,267.14 499.83,257.39 500.22,258.27 500.62,264.50 501.02,267.18 501.41,271.74 501.81,277.98 502.21,266.83 502.60,269.04 503.00,267.98 503.39,266.13 503.79,263.23 504.19,272.45 504.58,275.58 504.98,279.35 505.38,260.94 505.77,266.47 506.17,263.81 506.57,259.59 506.96,268.16 507.36,270.35 507.76,264.76 508.15,275.13 508.55,268.94 508.95,264.73 509.34,267.71 509.74,269.11 510.14,276.53 510.53,268.20 510.93,272.87 511.32,257.00 511.72,252.00 512.12,249.00 512.51,252.00 512.91,257.00 513.31,271.69 513.70,260.97 514.10,263.47 514.50,269.13 514.89,272.35 515.29,262.84 515.69,275.20 516.08,272.95 516.48,273.61 516.88,269.28 517.27,264.52 517.67,268.06 518.07,271.25 518.46,267.23 518.86,269.30 519.25,270.56 519.65,276.19 520.05,263.25 520.44,276.04 520.84,270.77 521.24,267.42 521.63,273.06 522.03,263.97 522.43,266.89 522.82,269.76 523.22,270.60 523.62,275.56 524.01,269.14 524.41,270.17 524.81,262.12 525.20,265.50 525.60,264.92 526.00,269.69 526.39,272.51 526.79,266.13 527.18,265.26 527.58,266.91 527.98,263.04 528.37,269.66"/><polyline points="534.72,267.19 535.12,269.28 535.51,277.62 535.91,270.79 536.30,272.37 536.70,271.36 537.10,273.94 537.49,273.63 537.89,268.30 538.29,265.37 538.68,272.50 539.08,271.89 539.48,267.95 539.87,263.25 540.27,258.77 540.67,262.61 541.06,268.95 541.46,266.73 541.86,268.89 542.25,271.71 542.65,262.01 543.05,264.09 543.44,268.20 543.84,263.72 544.23,268.59 544.63,264.64 545.03,268.23 545.42,271.94 545.82,262.07 546.22,265.47 546.61,261.74 547.01,269.09 547.41,265.94 547.80,276.22 548.20,277.27 548.60,269.72 548.99,262.99 549.39,267.40 549.79,267.15 550.18,276.35 550.58,255.00 550.98,250.00 551.37,247.00 551.77,250.00 552.16,255.00 552.56,270.09 552.96,260.36 553.35,265.31 553.75,264.73 554.15,270.65 554.54,268.64 554.94,264.37 555.34,262.62 555.73,267.01 556.13,271.22 556.53,264.58 556.92,259.50 557.32,271.12 557.72,266.55 558.11,275.01 558.51,266.69 558.90,273.76 559.30,267.65 559.70,261.79 560.09,269.41 560.49,265.70 560.89,262.54 561.28,265.29 561.68,272.16 562.08,264.79 562.47,270.39 562.87,270.27 563.27,267.78 563.66,268.70 564.06,263.22 564.46,270.79 564.85,266.55 565.25,265.75 565.65,262.95 566.04,265.27 566.44,267.29 566.84,265.42 567.23,274.49 567.63,264.20 568.02,269.45 568.42,271.91 568.82,265.95 569.21,266.83 569.61,264.27 570.01,262.38 570.40,265.37 570.80,274.96 571.20,263.28 571.59,277.08 571.99,269.83 572.39,266.45 572.78,268.67 573.18,262.99 573.58,268.75 573.97,270.78 574.37,270.63 574.76,264.19 575.16,268.07 575.56,267.97 575.95,275.37 576.35,265.45 576.75,271.50 577.14,265.37 577.54,265.41 577.94,263.95 578.33,269.56 578.73,262.22 579.13,274.31 579.52,263.44 579.92,271.76 580.32,266.71 580.71,258.65 581.11,262.95 581.51,270.61 581.90,257.45 582.30,265.58 582.69,272.43 583.09,268.74 583.49,266.16 583.88,266.45 584.28,263.71 584.68,276.64 585.07,270.38 585.47,264.90 585.87,268.79 586.26,261.69 586.66,266.87 587.06,263.37 587.45,272.86 587.85,273.57 588.25,271.35 588.64,267.32 589.04,265.88 589.44,268.37 589.83,266.59 590.23,265.47 590.62,271.64 591.02,272.62 591.42,273.48 591.81,268.01 592.21,268.39 592.61,266.72 593.00,265.54 593.40,261.31 593.80,271.79 594.19,272.16 594.59,270.35 594.99,271.08 595.38,268.30 595.78,262.04 596.18,268.08 596.57,265.17 596.97,275.58 597.37,269.60 597.76,266.51 598.16,262.36 598.56,269.19 598.95,272.74 599.35,270.28 599.74,263.50 600.14,268.77 600.54,271.10 600.93,271.86 601.33,267.49 601.73,272.47 602.12,260.45 602.52,264.46 602.92,273.24 603.31,270.29 603.71,266.24 604.11,268.06 604.50,258.03 604.90,258.94 605.30,266.88 605.69,273.69 606.09,263.17 606.49,274.43 606.88,269.11 607.28,265.23 607.67,262.95 608.07,267.05"/><polyline points="614.02,276.09 614.41,265.91 614.81,266.05 615.21,271.43 615.60,263.10 616.00,264.44 616.40,269.43 616.79,277.21 617.19,262.33 617.59,273.23 617.98,267.39 618.38,271.42 618.78,254.66 619.17,270.56 619.57,268.49 619.97,272.25 620.36,271.59 620.76,268.72 621.16,262.96 621.55,259.93 621.95,270.23 622.35,263.57 622.74,269.94 623.14,267.79 623.53,267.74 623.93,268.65 624.33,269.82 624.72,273.24 625.12,266.96 625.52,267.74 625.91,275.62 626.31,269.29 626.71,268.67 627.10,268.59 627.50,269.24 627.90,271.70 628.29,267.38 628.69,270.57 629.09,273.50 629.48,273.26 629.88,269.70 630.27,268.21 630.67,274.64 631.07,271.20 631.46,267.71 631.86,267.63 632.26,266.99 632.65,266.38 633.05,275.78 633.45,265.58 633.84,263.38 634.24,266.91 634.64,268.36 635.03,277.94 635.43,268.06 635.83,267.21 636.22,270.29 636.62,270.30 637.02,272.57 637.41,265.59 637.81,267.12 638.21,280.68 638.60,272.07 639.00,271.40 639.39,263.68 639.79,268.08 640.19,267.02 640.58,279.02 640.98,269.24 641.38,269.36 641.77,268.94 642.17,269.25 642.57,267.75 642.96,269.01 643.36,270.12 643.76,269.50 644.15,270.42 644.55,271.36 644.95,272.49 645.34,267.18 645.74,268.48 646.13,268.02 646.53,268.77 646.93,264.41 647.32,271.43 647.72,263.63 648.12,272.50 648.51,269.27 648.91,267.67 649.31,268.31 649.70,261.29 650.10,269.87 650.50,271.98 650.89,276.79 651.29,275.56 651.69,264.77 652.08,272.46 652.48,260.86 652.88,264.39 653.27,262.63 653.67,259.86 654.07,266.34 654.46,259.69 654.86,267.64 655.25,271.77 655.65,260.83 656.05,270.86 656.44,264.21 656.84,272.90 657.24,269.92 657.63,277.15 658.03,271.87 658.43,268.34 658.82,267.35 659.22,267.18 659.62,261.94 660.01,269.04 660.41,265.22 660.81,269.97 661.20,268.07 661.60,263.85 662.00,270.44 662.39,258.08 662.79,268.86 663.18,269.21 663.58,267.67 663.98,263.12 664.37,277.22 664.77,268.95 665.17,266.26 665.56,263.69 665.96,278.25 666.36,277.17 666.75,272.83 667.15,270.22 667.55,269.95 667.94,265.02 668.34,267.18 668.74,260.07 669.13,272.22 669.53,263.74 669.92,269.16 670.32,270.04 670.72,267.84 671.11,273.71 671.51,270.28 671.91,269.07 672.30,275.38 672.70,267.88 673.10,261.08 673.49,268.04 673.89,264.29 674.29,268.71 674.68,269.53 675.08,260.23 675.48,269.63 675.87,270.14 676.27,268.67 676.67,263.98 677.06,280.62 677.46,266.51 677.86,269.76 678.25,269.90 678.65,273.81 679.04,270.66 679.44,267.28 679.84,267.51 680.23,272.61 680.63,282.34 681.03,259.86 681.42,269.91 681.82,273.52 682.22,269.82 682.61,270.67 683.01,257.39 683.41,273.56 683.80,266.54 684.20,281.68 684.60,264.24 684.99,258.92 685.39,265.49 685.78,264.99 686.18,267.18 686.58,268.51 686.97,264.68 687.37,267.67"/><polyline points="693.32,262.41 693.72,263.97 694.11,272.07 694.51,274.08 694.90,272.53 695.30,266.86 695.70,269.68 696.09,269.60 696.49,267.25 696.89,269.54 697.28,276.41 697.68,269.29 698.08,271.46 698.47,268.17 698.87,267.32 699.27,267.10 699.66,261.86 700.06,267.74 700.46,267.88 700.85,267.85 701.25,269.27 701.64,272.02 702.04,267.65 702.44,266.45 702.83,260.02 703.23,269.74 703.63,269.31 704.02,273.55 704.42,268.03 704.82,268.59 705.21,262.54 705.61,267.16 706.01,266.25 706.40,262.01 706.80,267.69 707.20,265.23 707.59,266.17 707.99,271.63 708.39,267.42 708.78,265.32 709.18,267.02 709.58,280.21 709.97,253.04 710.37,271.16 710.76,269.63 711.16,266.24 711.56,264.72 711.95,265.30 712.35,269.02 712.75,270.02 713.14,270.32 713.54,280.10 713.94,268.52 714.33,272.35 714.73,274.59 715.13,268.58 715.52,260.92 715.92,270.04 716.32,269.95 716.71,272.13 717.11,265.87 717.50,268.62 717.90,274.07 718.30,264.22 718.69,270.00 719.09,262.46 719.49,269.99 719.88,272.96 720.28,267.39 720.68,269.89 721.07,268.63 721.47,268.82 721.87,267.46 722.26,267.49 722.66,270.31 723.06,266.47 723.45,279.34 723.85,269.07 724.25,269.54 724.64,265.57 725.04,274.58 725.43,264.72 725.83,269.42 726.23,267.76 726.62,275.58 727.02,277.42 727.42,265.91 727.81,270.51 728.21,275.18 728.61,261.15 729.00,271.02 729.40,274.72 729.80,257.79 730.19,267.20 730.59,272.32 730.99,268.95 731.38,266.91 731.78,262.45 732.18,270.72 732.57,264.43 732.97,267.14 733.37,274.26 733.76,268.93 734.16,260.24 734.55,270.51 734.95,269.04 735.35,279.10 735.74,265.53 736.14,276.34 736.54,269.42 736.93,263.32 737.33,268.34 737.73,263.57 738.12,273.36 738.52,264.32 738.92,263.15 739.31,267.20 739.71,269.12 740.11,267.28 740.50,268.50 740.90,263.23 741.29,270.57 741.69,267.54 742.09,268.41 742.48,263.67 742.88,268.65 743.28,267.98 743.67,273.32 744.07,255.26 744.47,268.14 744.86,266.90 745.26,272.77 745.66,269.26 746.05,275.32 746.45,262.14 746.85,267.42 747.24,274.21 747.64,264.47 748.04,270.72 748.43,276.92 748.83,264.90 749.23,268.71 749.62,271.27 750.02,265.39 750.41,266.00 750.81,270.03 751.21,268.51 751.60,268.93 752.00,267.32 752.40,270.24 752.79,259.98 753.19,278.74 753.59,266.09 753.98,268.16 754.38,261.47 754.78,262.48 755.17,267.37 755.57,274.73 755.97,276.77 756.36,277.79 756.76,265.88 757.15,272.61 757.55,253.87 757.95,276.64 758.34,261.75 758.74,259.86 759.14,268.94 759.53,265.63 759.93,263.02 760.33,267.34 760.72,267.15 761.12,269.75 761.52,264.09 761.91,266.17 762.31,270.51 762.71,268.39 763.10,271.17 763.50,265.31 763.90,270.05 764.29,263.27 764.69,264.20 765.09,267.48 765.48,261.52 765.88,273.34 766.27,265.15 766.67,275.39 767.07,266.46"/><polyline points="773.01,269.47 773.41,264.85 773.81,271.60 774.20,267.75 774.60,267.11 775.00,272.77 775.39,266.86 775.79,267.98 776.19,271.04 776.58,262.01 776.98,267.91 777.38,263.41 777.77,274.75 778.17,258.12 778.57,263.19 778.96,266.01 779.36,272.99 779.76,267.36 780.15,267.16 780.55,269.31 780.95,268.98 781.34,271.63 781.74,263.86 782.13,260.83 782.53,270.99 782.93,259.36 783.32,269.93 783.72,269.14 784.12,276.85 784.51,254.19 784.91,270.26 785.31,272.94 785.70,273.04 786.10,269.49 786.50,273.05 786.89,272.57 787.29,269.01 787.69,263.09 788.08,267.77 788.48,271.55 788.88,268.81 789.27,275.25 789.67,268.42 790.06,252.00 790.46,273.55 790.86,269.98 791.25,267.47 791.65,271.09 792.05,272.89 792.44,269.13 792.84,271.61 793.24,267.25 793.63,269.08 794.03,268.89 794.43,274.22 794.82,270.23 795.22,271.51 795.62,262.71 796.01,277.01 796.41,266.48 796.80,271.94 797.20,263.74 797.60,276.25 797.99,264.33 798.39,269.52 798.79,272.38 799.18,265.72 799.58,271.12 799.98,267.72 800.37,275.72 800.77,268.39 801.17,267.97 801.56,266.17 801.96,258.81 802.36,269.74 802.75,272.65 803.15,273.50 803.55,276.43 803.94,275.44 804.34,265.22 804.74,270.73 805.13,268.06 805.53,268.39 805.92,259.83 806.32,264.72 806.72,265.49 807.11,269.70 807.51,269.92 807.91,270.65 808.30,261.19 808.70,281.25 809.10,271.95 809.49,269.96 809.89,263.98 810.29,271.75 810.68,261.93 811.08,274.68 811.48,270.66 811.87,267.26 812.27,272.42 812.66,268.66 813.06,260.03 813.46,267.22 813.85,267.33 814.25,266.06 814.65,261.45 815.04,271.94 815.44,270.31 815.84,270.98 816.23,256.05 816.63,264.59 817.03,266.56 817.42,263.62 817.82,269.08 818.22,270.86 818.61,263.45 819.01,270.03 819.41,271.01 819.80,270.26 820.20,263.80 820.60,273.65 820.99,260.34 821.39,273.20 821.78,269.78 822.18,273.23 822.58,270.91 822.97,277.93 823.37,266.63 823.77,261.67 824.16,262.49 824.56,265.71 824.96,266.25 825.35,272.41 825.75,263.89 826.15,273.37 826.54,266.80 826.94,275.84 827.34,270.12 827.73,273.90 828.13,272.37 828.52,267.75 828.92,272.06 829.32,273.98 829.71,258.64 830.11,264.51 830.51,264.62 830.90,265.57 831.30,267.02 831.70,274.34 832.09,265.49 832.49,271.17 832.89,264.16 833.28,262.61 833.68,266.33 834.08,268.48 834.47,270.35 834.87,271.45 835.27,267.21 835.66,265.90 836.06,263.65 836.46,267.82 836.85,263.81 837.25,271.00 837.64,273.36 838.04,262.83 838.44,268.98 838.83,267.25 839.23,265.72 839.63,273.77 840.02,267.42 840.42,267.38 840.82,272.05 841.21,267.81 841.61,265.79 842.01,255.15 842.40,268.67 842.80,268.94 843.20,268.69 843.59,263.08 843.99,263.65 844.38,263.79 844.78,264.85 845.18,266.68 845.57,267.66 845.97,258.78 846.37,272.93"/><polyline points="852.32,265.71 852.71,266.45 853.11,273.84 853.50,269.96 853.90,269.87 854.30,270.75 854.69,265.75 855.09,266.41 855.49,270.34 855.88,261.37 856.28,264.84 856.68,267.26 857.07,262.70 857.47,270.65 857.87,267.57 858.26,276.35 858.66,264.00 859.06,266.02 859.45,264.64 859.85,270.63 860.25,274.87 860.64,265.38 861.04,268.74 861.43,272.01 861.83,266.45 862.23,272.56 862.62,271.57 863.02,264.07 863.42,268.54 863.81,272.15 864.21,272.38 864.61,266.19 865.00,269.39 865.40,259.85 865.80,270.12 866.19,272.68 866.59,266.31 866.99,263.38 867.38,261.59 867.78,279.92 868.17,269.04 868.57,269.81 868.97,269.94 869.36,268.66 869.76,267.73 870.16,275.10 870.55,262.74 870.95,256.59 871.35,262.25 871.74,266.82 872.14,268.38 872.54,275.26 872.93,265.75 873.33,268.18 873.73,272.30 874.12,266.82 874.52,261.76 874.92,270.31 875.31,272.47 875.71,272.43 876.11,266.31 876.50,272.76 876.90,268.37 877.29,267.84 877.69,272.21 878.09,273.48 878.48,268.37 878.88,273.70 879.28,262.06 879.67,271.47 880.07,265.25 880.47,268.45 880.86,261.80 881.26,269.12 881.66,270.38 882.05,280.57 882.45,281.17 882.85,267.45 883.24,269.45 883.64,270.22 884.03,268.62 884.43,265.40 884.83,264.42 885.22,260.21 885.62,262.98 886.02,267.48 886.41,263.00 886.81,266.05 887.21,260.22 887.60,266.68 888.00,269.15"/></g><g stroke="#e6e040" stroke-width="0.95"><path d="M132.10 266.00 L132.60 223.60 L133.20 183.60 L133.70 133.60 L134.15 103.60 L134.45 93.60 L134.95 93.60 L135.25 103.60 L135.70 133.60 L136.20 183.60 L136.80 223.60 L137.30 266.00"/><path d="M211.10 266.00 L211.60 254.50 L212.20 214.50 L212.70 164.50 L213.15 134.50 L213.45 124.50 L213.95 124.50 L214.25 134.50 L214.70 164.50 L215.20 214.50 L215.80 254.50 L216.30 266.00"/><path d="M290.90 266.00 L291.50 241.00 L292.00 191.00 L292.45 161.00 L292.75 151.00 L293.25 151.00 L293.55 161.00 L294.00 191.00 L294.50 241.00 L295.10 266.00"/><path d="M369.90 266.00 L370.40 259.70 L371.00 219.70 L371.50 169.70 L371.95 139.70 L372.25 129.70 L372.75 129.70 L373.05 139.70 L373.50 169.70 L374.00 219.70 L374.60 259.70 L375.10 266.00"/><path d="M449.30 266.00 L449.80 202.00 L450.40 162.00 L450.90 112.00 L451.35 82.00 L451.65 72.00 L452.15 72.00 L452.45 82.00 L452.90 112.00 L453.40 162.00 L454.00 202.00 L454.50 266.00"/><path d="M529.00 266.00 L529.50 204.90 L530.10 164.90 L530.60 114.90 L531.05 84.90 L531.35 74.90 L531.85 74.90 L532.15 84.90 L532.60 114.90 L533.10 164.90 L533.70 204.90 L534.20 266.00"/><path d="M608.40 266.00 L608.90 256.80 L609.50 216.80 L610.00 166.80 L610.45 136.80 L610.75 126.80 L611.25 126.80 L611.55 136.80 L612.00 166.80 L612.50 216.80 L613.10 256.80 L613.60 266.00"/><path d="M688.20 266.00 L688.80 244.80 L689.30 194.80 L689.75 164.80 L690.05 154.80 L690.55 154.80 L690.85 164.80 L691.30 194.80 L691.80 244.80 L692.40 266.00"/><path d="M767.90 266.00 L768.50 243.70 L769.00 193.70 L769.45 163.70 L769.75 153.70 L770.25 153.70 L770.55 163.70 L771.00 193.70 L771.50 243.70 L772.10 266.00"/><path d="M847.30 266.00 L847.90 232.50 L848.40 182.50 L848.85 152.50 L849.15 142.50 L849.65 142.50 L849.95 152.50 L850.40 182.50 L850.90 232.50 L851.50 266.00"/></g></g></svg>
<svg class="r" style="left:0;top:0" width="1024" height="576"><path d="M449.00 65.40h5.8l-2.9 5.8z" fill="#18d8ec"/></svg>
<div class="t" style="left:445.80px;top:57px;font-size:9.28px;line-height:9.28px;color:#22c4b8;transform:scaleX(0.961);">M1</div>
<svg class="r" style="left:0;top:0" width="1024" height="576"><path d="M528.70 67.90h5.8l-2.9 5.8z" fill="#18d8ec"/></svg>
<div class="t" style="left:525.50px;top:57px;font-size:9.28px;line-height:9.28px;color:#22c4b8;transform:scaleX(0.961);">M2</div>
<svg class="r" style="left:0;top:0" width="1024" height="576"><path d="M369.60 123.10h5.8l-2.9 5.8z" fill="#18d8ec"/></svg>
<div class="t" style="left:366.40px;top:111px;font-size:9.28px;line-height:9.28px;color:#22c4b8;transform:scaleX(0.961);">M3</div>
<svg class="r" style="left:0;top:0" width="1024" height="576"><path d="M608.50 120.10h5.8l-2.9 5.8z" fill="#18d8ec"/></svg>
<div class="t" style="left:605.30px;top:108px;font-size:9.28px;line-height:9.28px;color:#22c4b8;transform:scaleX(0.961);">M4</div>
<div class="t" style="left:789.60px;top:59px;font-size:11.01px;line-height:11.01px;color:#22c8c0;font-weight:bold;transform:scaleX(0.993);">M2[1]</div>
<div class="t" style="left:840.20px;top:59px;font-size:11.01px;line-height:11.01px;color:#22c8c0;font-weight:bold;transform:scaleX(0.935);">9.24 dBm</div>
<div class="t" style="left:789.60px;top:76px;font-size:11.30px;line-height:11.30px;color:#22c8c0;font-weight:bold;transform:scaleX(0.905);">#0</div>
<div class="t" style="left:821.40px;top:76px;font-size:11.30px;line-height:11.30px;color:#22c8c0;font-weight:bold;transform:scaleX(0.885);">1.199900 GHz</div>
<div class="t" style="left:789.60px;top:93px;font-size:11.30px;line-height:11.30px;color:#22c8c0;font-weight:bold;transform:scaleX(0.966);">M1[1]</div>
<div class="t" style="left:840.20px;top:93px;font-size:11.30px;line-height:11.30px;color:#22c8c0;font-weight:bold;transform:scaleX(0.910);">9.72 dBm</div>
<div class="t" style="left:789.60px;top:111px;font-size:11.01px;line-height:11.01px;color:#22c8c0;font-weight:bold;transform:scaleX(0.934);">#0</div>
<div class="t" style="left:821.40px;top:111px;font-size:11.01px;line-height:11.01px;color:#22c8c0;font-weight:bold;transform:scaleX(0.910);">1.000100 GHz</div>
<div class="r" style="left:94.5px;top:325.5px;width:794px;height:13px;background:#000;"></div>
<div class="t" style="left:96.00px;top:326px;font-size:12.03px;line-height:12.03px;color:#f0f0f0;font-weight:bold;transform:scaleX(0.885);">CF 1.1 GHz</div>
<div class="t" style="left:368.50px;top:326px;font-size:12.03px;line-height:12.03px;color:#f0f0f0;font-weight:bold;transform:scaleX(0.948);">2001 pts</div>
<div class="t" style="left:558.25px;top:326px;font-size:12.03px;line-height:12.03px;color:#f0f0f0;font-weight:bold;">200.0 MHz/</div>
<div class="t" style="left:814.25px;top:326px;font-size:12.03px;line-height:12.03px;color:#f0f0f0;font-weight:bold;transform:scaleX(0.913);">Span 2.0 GHz</div>
<div class="r" style="left:92px;top:342px;width:799px;height:114px;background:#22272c;"></div>
<div class="r" style="left:94px;top:343.5px;width:795px;height:15px;background:#2f3338;"></div>
<div class="t" style="left:95.90px;top:347px;font-size:11.30px;line-height:11.30px;color:#f0f0f0;font-weight:bold;transform:scaleX(0.975);">3 Spectrogram</div>
<div class="r" style="left:186.7px;top:348.4px;width:6.4px;height:6.4px;border-radius:50%;background:#f2e83a"></div>
<div class="t" style="left:196.40px;top:347px;font-size:11.30px;line-height:11.30px;color:#e0e0e0;">1Pk Clrw</div>
<div class="r" style="left:257.8px;top:345px;width:626.4px;height:13px;background:linear-gradient(90deg,#1a2ad0 0%,#1a40e0 6.7%,#1e78f0 18%,#10d0e0 25%,#10e0a8 33.6%,#30e060 43.5%,#48e020 50.7%,#90e010 63.5%,#c8e010 70.6%,#f0d810 77%,#f0a818 82.5%,#f07020 89.7%,#e82020 100%);"></div>
<div class="r" style="left:884.2px;top:345px;width:4px;height:13px;background:#505458;"></div>
<div class="r" style="left:94.5px;top:358px;width:794px;height:1px;background:#101418;"></div>
<div class="t" style="left:259.00px;top:347px;font-size:11.30px;line-height:11.30px;color:#1420a0;font-weight:bold;transform:scaleX(0.829);">-65dBm</div>
<div class="t" style="left:355.00px;top:347px;font-size:11.30px;line-height:11.30px;color:#104888;font-weight:bold;transform:scaleX(0.870);">-50dBm</div>
<div class="t" style="left:433.75px;top:347px;font-size:11.30px;line-height:11.30px;color:#0c8070;font-weight:bold;transform:scaleX(0.851);">-40dBm</div>
<div class="t" style="left:512.00px;top:347px;font-size:11.30px;line-height:11.30px;color:#108030;font-weight:bold;transform:scaleX(0.865);">-30dBm</div>
<div class="t" style="left:589.80px;top:347px;font-size:11.30px;line-height:11.30px;color:#1e8010;font-weight:bold;transform:scaleX(0.870);">-20dBm</div>
<div class="t" style="left:668.75px;top:347px;font-size:11.30px;line-height:11.30px;color:#607000;font-weight:bold;transform:scaleX(0.849);">-10dBm</div>
<div class="t" style="left:751.40px;top:347px;font-size:11.30px;line-height:11.30px;color:#806000;font-weight:bold;transform:scaleX(0.847);">0dBm</div>
<div class="t" style="left:850.60px;top:347px;font-size:11.30px;line-height:11.30px;color:#901010;font-weight:bold;transform:scaleX(0.851);">15dBm</div>
<div class="r" style="left:94.5px;top:358.5px;width:793.5px;height:80.5px;background:linear-gradient(90deg,rgba(20,215,240,0.06) 0px,rgba(20,215,240,0.06) 1px,rgba(20,215,240,0.04) 1px,rgba(20,215,240,0.04) 2px,rgba(20,215,240,0.05) 2px,rgba(20,215,240,0.05) 6px,rgba(20,215,240,0.01) 6px,rgba(20,215,240,0.01) 10px,rgba(20,215,240,0.09) 10px,rgba(20,215,240,0.09) 11px,rgba(20,215,240,0.03) 11px,rgba(20,215,240,0.03) 14px,rgba(20,215,240,0.02) 14px,rgba(20,215,240,0.02) 15px,rgba(20,215,240,0.05) 15px,rgba(20,215,240,0.05) 21px,rgba(20,215,240,0.05) 21px,rgba(20,215,240,0.05) 29px,rgba(20,215,240,0.06) 29px,rgba(20,215,240,0.06) 32px,rgba(20,215,240,0.02) 32px,rgba(20,215,240,0.02) 33px,rgba(20,215,240,0.09) 33px,rgba(20,215,240,0.09) 34px,rgba(20,215,240,0.04) 34px,rgba(20,215,240,0.04) 38px,rgba(20,215,240,0.07) 38px,rgba(20,215,240,0.07) 39px,rgba(20,215,240,0.02) 39px,rgba(20,215,240,0.02) 40px,rgba(20,215,240,0.00) 40px,rgba(20,215,240,0.00) 44px,rgba(20,215,240,0.00) 44px,rgba(20,215,240,0.00) 52px,rgba(20,215,240,0.03) 52px,rgba(20,215,240,0.03) 60px,rgba(20,215,240,0.07) 60px,rgba(20,215,240,0.07) 64px,rgba(20,215,240,0.07) 64px,rgba(20,215,240,0.07) 67px,rgba(20,215,240,0.04) 67px,rgba(20,215,240,0.04) 70px,rgba(20,215,240,0.06) 70px,rgba(20,215,240,0.06) 78px,rgba(20,215,240,0.09) 78px,rgba(20,215,240,0.09) 79px,rgba(20,215,240,0.00) 79px,rgba(20,215,240,0.00) 80px,rgba(20,215,240,0.02) 80px,rgba(20,215,240,0.02) 83px,rgba(20,215,240,0.04) 83px,rgba(20,215,240,0.04) 89px,rgba(20,215,240,0.09) 89px,rgba(20,215,240,0.09) 95px,rgba(20,215,240,0.05) 95px,rgba(20,215,240,0.05) 98px,rgba(20,215,240,0.06) 98px,rgba(20,215,240,0.06) 101px,rgba(20,215,240,0.06) 101px,rgba(20,215,240,0.06) 105px,rgba(20,215,240,0.02) 105px,rgba(20,215,240,0.02) 109px,rgba(20,215,240,0.07) 109px,rgba(20,215,240,0.07) 111px,rgba(20,215,240,0.09) 111px,rgba(20,215,240,0.09) 112px,rgba(20,215,240,0.07) 112px,rgba(20,215,240,0.07) 116px,rgba(20,215,240,0.07) 116px,rgba(20,215,240,0.07) 117px,rgba(20,215,240,0.10) 117px,rgba(20,215,240,0.10) 119px,rgba(20,215,240,0.06) 119px,rgba(20,215,240,0.06) 123px,rgba(20,215,240,0.07) 123px,rgba(20,215,240,0.07) 129px,rgba(20,215,240,0.08) 129px,rgba(20,215,240,0.08) 135px,rgba(20,215,240,0.03) 135px,rgba(20,215,240,0.03) 139px,rgba(20,215,240,0.01) 139px,rgba(20,215,240,0.01) 140px,rgba(20,215,240,0.06) 140px,rgba(20,215,240,0.06) 148px,rgba(20,215,240,0.01) 148px,rgba(20,215,240,0.01) 151px,rgba(20,215,240,0.01) 151px,rgba(20,215,240,0.01) 159px,rgba(20,215,240,0.00) 159px,rgba(20,215,240,0.00) 160px,rgba(20,215,240,0.08) 160px,rgba(20,215,240,0.08) 163px,rgba(20,215,240,0.01) 163px,rgba(20,215,240,0.01) 171px,rgba(20,215,240,0.06) 171px,rgba(20,215,240,0.06) 175px,rgba(20,215,240,0.04) 175px,rgba(20,215,240,0.04) 176px,rgba(20,215,240,0.03) 176px,rgba(20,215,240,0.03) 180px,rgba(20,215,240,0.05) 180px,rgba(20,215,240,0.05) 182px,rgba(20,215,240,0.03) 182px,rgba(20,215,240,0.03) 183px,rgba(20,215,240,0.01) 183px,rgba(20,215,240,0.01) 184px,rgba(20,215,240,0.00) 184px,rgba(20,215,240,0.00) 188px,rgba(20,215,240,0.10) 188px,rgba(20,215,240,0.10) 189px,rgba(20,215,240,0.06) 189px,rgba(20,215,240,0.06) 191px,rgba(20,215,240,0.07) 191px,rgba(20,215,240,0.07) 192px,rgba(20,215,240,0.03) 192px,rgba(20,215,240,0.03) 200px,rgba(20,215,240,0.10) 200px,rgba(20,215,240,0.10) 202px,rgba(20,215,240,0.04) 202px,rgba(20,215,240,0.04) 210px,rgba(20,215,240,0.09) 210px,rgba(20,215,240,0.09) 213px,rgba(20,215,240,0.06) 213px,rgba(20,215,240,0.06) 216px,rgba(20,215,240,0.07) 216px,rgba(20,215,240,0.07) 220px,rgba(20,215,240,0.06) 220px,rgba(20,215,240,0.06) 221px,rgba(20,215,240,0.05) 221px,rgba(20,215,240,0.05) 229px,rgba(20,215,240,0.06) 229px,rgba(20,215,240,0.06) 232px,rgba(20,215,240,0.02) 232px,rgba(20,215,240,0.02) 238px,rgba(20,215,240,0.04) 238px,rgba(20,215,240,0.04) 240px,rgba(20,215,240,0.05) 240px,rgba(20,215,240,0.05) 242px,rgba(20,215,240,0.03) 242px,rgba(20,215,240,0.03) 246px,rgba(20,215,240,0.04) 246px,rgba(20,215,240,0.04) 254px,rgba(20,215,240,0.03) 254px,rgba(20,215,240,0.03) 258px,rgba(20,215,240,0.06) 258px,rgba(20,215,240,0.06) 261px,rgba(20,215,240,0.01) 261px,rgba(20,215,240,0.01) 267px,rgba(20,215,240,0.06) 267px,rgba(20,215,240,0.06) 273px,rgba(20,215,240,0.04) 273px,rgba(20,215,240,0.04) 276px,rgba(20,215,240,0.06) 276px,rgba(20,215,240,0.06) 278px,rgba(20,215,240,0.07) 278px,rgba(20,215,240,0.07) 280px,rgba(20,215,240,0.06) 280px,rgba(20,215,240,0.06) 281px,rgba(20,215,240,0.00) 281px,rgba(20,215,240,0.00) 287px,rgba(20,215,240,0.03) 287px,rgba(20,215,240,0.03) 289px,rgba(20,215,240,0.03) 289px,rgba(20,215,240,0.03) 292px,rgba(20,215,240,0.03) 292px,rgba(20,215,240,0.03) 296px,rgba(20,215,240,0.02) 296px,rgba(20,215,240,0.02) 298px,rgba(20,215,240,0.04) 298px,rgba(20,215,240,0.04) 306px,rgba(20,215,240,0.03) 306px,rgba(20,215,240,0.03) 310px,rgba(20,215,240,0.04) 310px,rgba(20,215,240,0.04) 318px,rgba(20,215,240,0.08) 318px,rgba(20,215,240,0.08) 326px,rgba(20,215,240,0.07) 326px,rgba(20,215,240,0.07) 330px,rgba(20,215,240,0.03) 330px,rgba(20,215,240,0.03) 331px,rgba(20,215,240,0.07) 331px,rgba(20,215,240,0.07) 332px,rgba(20,215,240,0.02) 332px,rgba(20,215,240,0.02) 334px,rgba(20,215,240,0.07) 334px,rgba(20,215,240,0.07) 335px,rgba(20,215,240,0.07) 335px,rgba(20,215,240,0.07) 341px,rgba(20,215,240,0.06) 341px,rgba(20,215,240,0.06) 342px,rgba(20,215,240,0.07) 342px,rgba(20,215,240,0.07) 344px,rgba(20,215,240,0.04) 344px,rgba(20,215,240,0.04) 345px,rgba(20,215,240,0.10) 345px,rgba(20,215,240,0.10) 353px,rgba(20,215,240,0.03) 353px,rgba(20,215,240,0.03) 354px,rgba(20,215,240,0.02) 354px,rgba(20,215,240,0.02) 360px,rgba(20,215,240,0.05) 360px,rgba(20,215,240,0.05) 364px,rgba(20,215,240,0.08) 364px,rgba(20,215,240,0.08) 365px,rgba(20,215,240,0.05) 365px,rgba(20,215,240,0.05) 366px,rgba(20,215,240,0.03) 366px,rgba(20,215,240,0.03) 367px,rgba(20,215,240,0.08) 367px,rgba(20,215,240,0.08) 375px,rgba(20,215,240,0.09) 375px,rgba(20,215,240,0.09) 376px,rgba(20,215,240,0.08) 376px,rgba(20,215,240,0.08) 378px,rgba(20,215,240,0.01) 378px,rgba(20,215,240,0.01) 384px,rgba(20,215,240,0.03) 384px,rgba(20,215,240,0.03) 388px,rgba(20,215,240,0.04) 388px,rgba(20,215,240,0.04) 389px,rgba(20,215,240,0.08) 389px,rgba(20,215,240,0.08) 393px,rgba(20,215,240,0.05) 393px,rgba(20,215,240,0.05) 395px,rgba(20,215,240,0.04) 395px,rgba(20,215,240,0.04) 401px,rgba(20,215,240,0.06) 401px,rgba(20,215,240,0.06) 404px,rgba(20,215,240,0.09) 404px,rgba(20,215,240,0.09) 405px,rgba(20,215,240,0.02) 405px,rgba(20,215,240,0.02) 406px,rgba(20,215,240,0.09) 406px,rgba(20,215,240,0.09) 409px,rgba(20,215,240,0.10) 409px,rgba(20,215,240,0.10) 413px,rgba(20,215,240,0.06) 413px,rgba(20,215,240,0.06) 416px,rgba(20,215,240,0.02) 416px,rgba(20,215,240,0.02) 422px,rgba(20,215,240,0.05) 422px,rgba(20,215,240,0.05) 428px,rgba(20,215,240,0.07) 428px,rgba(20,215,240,0.07) 436px,rgba(20,215,240,0.10) 436px,rgba(20,215,240,0.10) 440px,rgba(20,215,240,0.03) 440px,rgba(20,215,240,0.03) 444px,rgba(20,215,240,0.09) 444px,rgba(20,215,240,0.09) 445px,rgba(20,215,240,0.06) 445px,rgba(20,215,240,0.06) 453px,rgba(20,215,240,0.01) 453px,rgba(20,215,240,0.01) 455px,rgba(20,215,240,0.00) 455px,rgba(20,215,240,0.00) 456px,rgba(20,215,240,0.07) 456px,rgba(20,215,240,0.07) 464px,rgba(20,215,240,0.09) 464px,rgba(20,215,240,0.09) 465px,rgba(20,215,240,0.06) 465px,rgba(20,215,240,0.06) 468px,rgba(20,215,240,0.05) 468px,rgba(20,215,240,0.05) 469px,rgba(20,215,240,0.02) 469px,rgba(20,215,240,0.02) 470px,rgba(20,215,240,0.02) 470px,rgba(20,215,240,0.02) 472px,rgba(20,215,240,0.05) 472px,rgba(20,215,240,0.05) 473px,rgba(20,215,240,0.01) 473px,rgba(20,215,240,0.01) 476px,rgba(20,215,240,0.01) 476px,rgba(20,215,240,0.01) 480px,rgba(20,215,240,0.03) 480px,rgba(20,215,240,0.03) 481px,rgba(20,215,240,0.05) 481px,rgba(20,215,240,0.05) 489px,rgba(20,215,240,0.08) 489px,rgba(20,215,240,0.08) 497px,rgba(20,215,240,0.02) 497px,rgba(20,215,240,0.02) 499px,rgba(20,215,240,0.05) 499px,rgba(20,215,240,0.05) 500px,rgba(20,215,240,0.01) 500px,rgba(20,215,240,0.01) 508px,rgba(20,215,240,0.08) 508px,rgba(20,215,240,0.08) 509px,rgba(20,215,240,0.01) 509px,rgba(20,215,240,0.01) 517px,rgba(20,215,240,0.05) 517px,rgba(20,215,240,0.05) 518px,rgba(20,215,240,0.09) 518px,rgba(20,215,240,0.09) 522px,rgba(20,215,240,0.08) 522px,rgba(20,215,240,0.08) 523px,rgba(20,215,240,0.03) 523px,rgba(20,215,240,0.03) 524px,rgba(20,215,240,0.05) 524px,rgba(20,215,240,0.05) 528px,rgba(20,215,240,0.05) 528px,rgba(20,215,240,0.05) 529px,rgba(20,215,240,0.08) 529px,rgba(20,215,240,0.08) 537px,rgba(20,215,240,0.01) 537px,rgba(20,215,240,0.01) 545px,rgba(20,215,240,0.00) 545px,rgba(20,215,240,0.00) 546px,rgba(20,215,240,0.01) 546px,rgba(20,215,240,0.01) 547px,rgba(20,215,240,0.09) 547px,rgba(20,215,240,0.09) 548px,rgba(20,215,240,0.05) 548px,rgba(20,215,240,0.05) 549px,rgba(20,215,240,0.03) 549px,rgba(20,215,240,0.03) 552px,rgba(20,215,240,0.01) 552px,rgba(20,215,240,0.01) 554px,rgba(20,215,240,0.06) 554px,rgba(20,215,240,0.06) 557px,rgba(20,215,240,0.03) 557px,rgba(20,215,240,0.03) 561px,rgba(20,215,240,0.02) 561px,rgba(20,215,240,0.02) 563px,rgba(20,215,240,0.04) 563px,rgba(20,215,240,0.04) 565px,rgba(20,215,240,0.06) 565px,rgba(20,215,240,0.06) 566px,rgba(20,215,240,0.07) 566px,rgba(20,215,240,0.07) 572px,rgba(20,215,240,0.01) 572px,rgba(20,215,240,0.01) 580px,rgba(20,215,240,0.00) 580px,rgba(20,215,240,0.00) 581px,rgba(20,215,240,0.06) 581px,rgba(20,215,240,0.06) 584px,rgba(20,215,240,0.05) 584px,rgba(20,215,240,0.05) 592px,rgba(20,215,240,0.08) 592px,rgba(20,215,240,0.08) 598px,rgba(20,215,240,0.09) 598px,rgba(20,215,240,0.09) 602px,rgba(20,215,240,0.04) 602px,rgba(20,215,240,0.04) 603px,rgba(20,215,240,0.08) 603px,rgba(20,215,240,0.08) 606px,rgba(20,215,240,0.04) 606px,rgba(20,215,240,0.04) 608px,rgba(20,215,240,0.04) 608px,rgba(20,215,240,0.04) 614px,rgba(20,215,240,0.02) 614px,rgba(20,215,240,0.02) 615px,rgba(20,215,240,0.03) 615px,rgba(20,215,240,0.03) 619px,rgba(20,215,240,0.01) 619px,rgba(20,215,240,0.01) 623px,rgba(20,215,240,0.02) 623px,rgba(20,215,240,0.02) 626px,rgba(20,215,240,0.09) 626px,rgba(20,215,240,0.09) 627px,rgba(20,215,240,0.04) 627px,rgba(20,215,240,0.04) 629px,rgba(20,215,240,0.08) 629px,rgba(20,215,240,0.08) 633px,rgba(20,215,240,0.01) 633px,rgba(20,215,240,0.01) 635px,rgba(20,215,240,0.01) 635px,rgba(20,215,240,0.01) 641px,rgba(20,215,240,0.07) 641px,rgba(20,215,240,0.07) 649px,rgba(20,215,240,0.09) 649px,rgba(20,215,240,0.09) 657px,rgba(20,215,240,0.04) 657px,rgba(20,215,240,0.04) 665px,rgba(20,215,240,0.07) 665px,rgba(20,215,240,0.07) 666px,rgba(20,215,240,0.05) 666px,rgba(20,215,240,0.05) 670px,rgba(20,215,240,0.06) 670px,rgba(20,215,240,0.06) 678px,rgba(20,215,240,0.05) 678px,rgba(20,215,240,0.05) 679px,rgba(20,215,240,0.08) 679px,rgba(20,215,240,0.08) 680px,rgba(20,215,240,0.05) 680px,rgba(20,215,240,0.05) 681px,rgba(20,215,240,0.01) 681px,rgba(20,215,240,0.01) 685px,rgba(20,215,240,0.02) 685px,rgba(20,215,240,0.02) 688px,rgba(20,215,240,0.03) 688px,rgba(20,215,240,0.03) 689px,rgba(20,215,240,0.01) 689px,rgba(20,215,240,0.01) 697px,rgba(20,215,240,0.01) 697px,rgba(20,215,240,0.01) 705px,rgba(20,215,240,0.08) 705px,rgba(20,215,240,0.08) 708px,rgba(20,215,240,0.06) 708px,rgba(20,215,240,0.06) 710px,rgba(20,215,240,0.01) 710px,rgba(20,215,240,0.01) 718px,rgba(20,215,240,0.06) 718px,rgba(20,215,240,0.06) 726px,rgba(20,215,240,0.07) 726px,rgba(20,215,240,0.07) 730px,rgba(20,215,240,0.06) 730px,rgba(20,215,240,0.06) 731px,rgba(20,215,240,0.09) 731px,rgba(20,215,240,0.09) 732px,rgba(20,215,240,0.06) 732px,rgba(20,215,240,0.06) 733px,rgba(20,215,240,0.06) 733px,rgba(20,215,240,0.06) 741px,rgba(20,215,240,0.01) 741px,rgba(20,215,240,0.01) 749px,rgba(20,215,240,0.06) 749px,rgba(20,215,240,0.06) 750px,rgba(20,215,240,0.06) 750px,rgba(20,215,240,0.06) 753px,rgba(20,215,240,0.09) 753px,rgba(20,215,240,0.09) 761px,rgba(20,215,240,0.04) 761px,rgba(20,215,240,0.04) 763px,rgba(20,215,240,0.09) 763px,rgba(20,215,240,0.09) 766px,rgba(20,215,240,0.04) 766px,rgba(20,215,240,0.04) 770px,rgba(20,215,240,0.04) 770px,rgba(20,215,240,0.04) 771px,rgba(20,215,240,0.10) 771px,rgba(20,215,240,0.10) 772px,rgba(20,215,240,0.08) 772px,rgba(20,215,240,0.08) 775px,rgba(20,215,240,0.04) 775px,rgba(20,215,240,0.04) 776px,rgba(20,215,240,0.08) 776px,rgba(20,215,240,0.08) 780px,rgba(20,215,240,0.09) 780px,rgba(20,215,240,0.09) 786px,rgba(20,215,240,0.05) 786px,rgba(20,215,240,0.05) 792px,rgba(20,215,240,0.04) 792px,rgba(20,215,240,0.04) 798px),#0ac2e2;"></div>
<div class="r" style="left:472px;top:358.5px;width:2.5px;height:80.5px;background:rgba(110,225,240,0.16);"></div>
<div class="r" style="left:511.5px;top:358.5px;width:2.5px;height:80.5px;background:rgba(110,225,240,0.16);"></div>
<div class="r" style="left:550.5px;top:358.5px;width:2.5px;height:80.5px;background:rgba(110,225,240,0.16);"></div>
<div class="r" style="left:131.0px;top:358.5px;width:7px;height:80.5px;background:linear-gradient(90deg,rgba(10,194,226,0) 0%,#40d0a0 14%,#b8c820 28%,#c8a808 40%,#c8a808 60%,#b8c820 72%,#40d0a0 86%,rgba(10,194,226,0) 100%);"></div>
<div class="r" style="left:210.0px;top:358.5px;width:7px;height:80.5px;background:linear-gradient(90deg,rgba(10,194,226,0) 0%,#30d8a0 14%,#98e020 28%,#a8e010 40%,#a8e010 60%,#98e020 72%,#30d8a0 86%,rgba(10,194,226,0) 100%);"></div>
<div class="r" style="left:289.5px;top:358.5px;width:7px;height:80.5px;background:linear-gradient(90deg,rgba(10,194,226,0) 0%,#20d8a8 14%,#60e040 28%,#80e020 40%,#80e020 60%,#60e040 72%,#20d8a8 86%,rgba(10,194,226,0) 100%);"></div>
<div class="r" style="left:369.0px;top:358.5px;width:7px;height:80.5px;background:linear-gradient(90deg,rgba(10,194,226,0) 0%,#30d8a0 14%,#90e028 28%,#a0e818 40%,#a0e818 60%,#90e028 72%,#30d8a0 86%,rgba(10,194,226,0) 100%);"></div>
<div class="r" style="left:448.5px;top:358.5px;width:7px;height:80.5px;background:linear-gradient(90deg,rgba(10,194,226,0) 0%,#30d090 14%,#c8b030 28%,#c87008 40%,#c87008 60%,#c8b030 72%,#30d090 86%,rgba(10,194,226,0) 100%);"></div>
<div class="r" style="left:528.5px;top:358.5px;width:7px;height:80.5px;background:linear-gradient(90deg,rgba(10,194,226,0) 0%,#30d090 14%,#c8b030 28%,#c87008 40%,#c87008 60%,#c8b030 72%,#30d090 86%,rgba(10,194,226,0) 100%);"></div>
<div class="r" style="left:608.0px;top:358.5px;width:7px;height:80.5px;background:linear-gradient(90deg,rgba(10,194,226,0) 0%,#30d8a0 14%,#98e020 28%,#b0e810 40%,#b0e810 60%,#98e020 72%,#30d8a0 86%,rgba(10,194,226,0) 100%);"></div>
<div class="r" style="left:687.0px;top:358.5px;width:7px;height:80.5px;background:linear-gradient(90deg,rgba(10,194,226,0) 0%,#20d8b0 14%,#38e050 28%,#40e030 40%,#40e030 60%,#38e050 72%,#20d8b0 86%,rgba(10,194,226,0) 100%);"></div>
<div class="r" style="left:766.5px;top:358.5px;width:7px;height:80.5px;background:linear-gradient(90deg,rgba(10,194,226,0) 0%,#20d8b0 14%,#48e040 28%,#58e020 40%,#58e020 60%,#48e040 72%,#20d8b0 86%,rgba(10,194,226,0) 100%);"></div>
<div class="r" style="left:846.0px;top:358.5px;width:7px;height:80.5px;background:linear-gradient(90deg,rgba(10,194,226,0) 0%,#30d8a0 14%,#80e028 28%,#98e818 40%,#98e818 60%,#80e028 72%,#30d8a0 86%,rgba(10,194,226,0) 100%);"></div>
<div class="r" style="left:366px;top:358.8px;width:12.5px;height:11px;background:rgba(10,50,70,0.85);"></div>
<div class="t" style="left:367.00px;top:359px;font-size:11.59px;line-height:11.59px;color:rgba(80,200,210,0.8);transform:scaleX(0.688);">M3</div>
<div class="r" style="left:446px;top:358.8px;width:12.5px;height:11px;background:rgba(10,50,70,0.85);"></div>
<div class="t" style="left:446.40px;top:359px;font-size:11.59px;line-height:11.59px;color:rgba(80,200,210,0.8);transform:scaleX(0.688);">M1</div>
<div class="r" style="left:526px;top:358.8px;width:12.5px;height:11px;background:rgba(10,50,70,0.85);"></div>
<div class="t" style="left:526.10px;top:359px;font-size:11.59px;line-height:11.59px;color:rgba(80,200,210,0.8);transform:scaleX(0.688);">M2</div>
<div class="r" style="left:605px;top:358.8px;width:12.5px;height:11px;background:rgba(10,50,70,0.85);"></div>
<div class="t" style="left:605.50px;top:359px;font-size:11.59px;line-height:11.59px;color:rgba(80,200,210,0.8);transform:scaleX(0.688);">M4</div>
<div class="r" style="left:94.5px;top:439px;width:794px;height:16px;background:#000;"></div>
<div class="t" style="left:96.00px;top:441px;font-size:12.32px;line-height:12.32px;color:#f0f0f0;font-weight:bold;transform:scaleX(0.863);">CF 1.1 GHz</div>
<div class="t" style="left:368.50px;top:441px;font-size:12.32px;line-height:12.32px;color:#f0f0f0;font-weight:bold;transform:scaleX(0.925);">2001 pts</div>
<div class="t" style="left:554.00px;top:441px;font-size:12.32px;line-height:12.32px;color:#f0f0f0;font-weight:bold;transform:scaleX(0.891);">Span 2.0 GHz</div>
<div class="t" style="left:832.50px;top:441px;font-size:12.32px;line-height:12.32px;color:#f0f0f0;font-weight:bold;transform:scaleX(0.915);">Frame # 0</div>
<div class="r" style="left:94.5px;top:455px;width:794px;height:1px;background:#4a4f55;"></div>
<div class="r" style="left:92px;top:456px;width:799px;height:94px;background:#22272c;"></div>
<div class="r" style="left:94px;top:457.5px;width:795px;height:15px;background:#2e3237;"></div>
<div class="t" style="left:96.20px;top:461px;font-size:11.88px;line-height:11.88px;color:#f0f0f0;font-weight:bold;transform:scaleX(0.976);">2 Marker Table</div>
<div class="r" style="left:94px;top:473px;width:795px;height:77px;background:#000;"></div>
<div class="r" style="left:96.2px;top:474px;width:42.999999999999986px;height:16px;background:#62636f;"></div>
<div class="r" style="left:140.2px;top:474px;width:32.80000000000001px;height:16px;background:#62636f;"></div>
<div class="r" style="left:174.5px;top:474px;width:30.30000000000001px;height:16px;background:#62636f;"></div>
<div class="r" style="left:206.5px;top:474px;width:80.39999999999998px;height:16px;background:#62636f;"></div>
<div class="r" style="left:288.2px;top:474px;width:139.5px;height:16px;background:#62636f;"></div>
<div class="r" style="left:429px;top:474px;width:121.70000000000005px;height:16px;background:#62636f;"></div>
<div class="r" style="left:552.3px;top:474px;width:158.20000000000005px;height:16px;background:#62636f;"></div>
<div class="r" style="left:712.3px;top:474px;width:175.10000000000002px;height:16px;background:#62636f;"></div>
<div class="t" style="left:106.40px;top:478px;font-size:11.88px;line-height:11.88px;color:#e8e8ec;font-weight:bold;transform:scaleX(0.884);">Type</div>
<div class="t" style="left:148.00px;top:478px;font-size:11.88px;line-height:11.88px;color:#e8e8ec;font-weight:bold;transform:scaleX(0.995);">Ref</div>
<div class="t" style="left:180.00px;top:478px;font-size:11.88px;line-height:11.88px;color:#e8e8ec;font-weight:bold;transform:scaleX(1.017);">Trc</div>
<div class="t" style="left:229.00px;top:478px;font-size:11.88px;line-height:11.88px;color:#e8e8ec;font-weight:bold;transform:scaleX(0.989);">Frame</div>
<div class="t" style="left:338.00px;top:478px;font-size:11.88px;line-height:11.88px;color:#e8e8ec;font-weight:bold;transform:scaleX(1.009);">X-Value</div>
<div class="t" style="left:456.00px;top:478px;font-size:11.88px;line-height:11.88px;color:#e8e8ec;font-weight:bold;transform:scaleX(1.095);">Y-Value</div>
<div class="t" style="left:609.00px;top:478px;font-size:11.88px;line-height:11.88px;color:#e8e8ec;font-weight:bold;transform:scaleX(0.944);">Function</div>
<div class="t" style="left:758.00px;top:478px;font-size:11.88px;line-height:11.88px;color:#e8e8ec;font-weight:bold;transform:scaleX(0.953);">Function Result</div>
<div class="t" style="left:108.90px;top:493px;font-size:11.88px;line-height:11.88px;color:#e0e0e0;">M1</div>
<div class="t" style="left:185.90px;top:493px;font-size:11.88px;line-height:11.88px;color:#e0e0e0;">1</div>
<div class="t" style="left:243.40px;top:493px;font-size:11.88px;line-height:11.88px;color:#e0e0e0;">0</div>
<div class="t" style="left:322.40px;top:491px;font-size:12.60px;line-height:12.60px;color:#ececec;font-weight:bold;">1.0001 GHz</div>
<div class="t" style="left:461.00px;top:491px;font-size:12.60px;line-height:12.60px;color:#ececec;font-weight:bold;transform:scaleX(1.016);">9.72 dBm</div>
<div class="t" style="left:108.90px;top:508px;font-size:11.88px;line-height:11.88px;color:#e0e0e0;">M2</div>
<div class="t" style="left:185.90px;top:508px;font-size:11.88px;line-height:11.88px;color:#e0e0e0;">1</div>
<div class="t" style="left:243.40px;top:508px;font-size:11.88px;line-height:11.88px;color:#e0e0e0;">0</div>
<div class="t" style="left:322.40px;top:505px;font-size:12.60px;line-height:12.60px;color:#ececec;font-weight:bold;">1.1999 GHz</div>
<div class="t" style="left:461.00px;top:505px;font-size:12.60px;line-height:12.60px;color:#ececec;font-weight:bold;transform:scaleX(1.016);">9.24 dBm</div>
<div class="t" style="left:554.00px;top:507px;font-size:12.61px;line-height:12.61px;color:#e0e0e0;">TOI</div>
<div class="t" style="left:761.50px;top:502px;font-size:16.23px;line-height:16.23px;color:#ffffff;font-weight:bold;transform:scaleX(0.801);">17.735 dBm</div>
<div class="t" style="left:108.90px;top:522px;font-size:11.88px;line-height:11.88px;color:#e0e0e0;">M3</div>
<div class="t" style="left:185.90px;top:522px;font-size:11.88px;line-height:11.88px;color:#e0e0e0;">1</div>
<div class="t" style="left:243.40px;top:522px;font-size:11.88px;line-height:11.88px;color:#e0e0e0;">0</div>
<div class="t" style="left:325.10px;top:519px;font-size:12.60px;line-height:12.60px;color:#ececec;font-weight:bold;transform:scaleX(1.056);">800.3 MHz</div>
<div class="t" style="left:456.40px;top:519px;font-size:12.60px;line-height:12.60px;color:#ececec;font-weight:bold;transform:scaleX(1.022);">-7.64 dBm</div>
<div class="t" style="left:554.00px;top:521px;font-size:12.61px;line-height:12.61px;color:#e0e0e0;">TOI (max)</div>
<div class="t" style="left:772.00px;top:521px;font-size:12.32px;line-height:12.32px;color:#e0e0e0;transform:scaleX(0.929);">18.396 dBm</div>
<div class="t" style="left:108.90px;top:536px;font-size:11.88px;line-height:11.88px;color:#e0e0e0;">M4</div>
<div class="t" style="left:185.90px;top:536px;font-size:11.88px;line-height:11.88px;color:#e0e0e0;">1</div>
<div class="t" style="left:243.40px;top:536px;font-size:11.88px;line-height:11.88px;color:#e0e0e0;">0</div>
<div class="t" style="left:322.40px;top:534px;font-size:12.60px;line-height:12.60px;color:#ececec;font-weight:bold;">1.3997 GHz</div>
<div class="t" style="left:456.40px;top:534px;font-size:12.60px;line-height:12.60px;color:#ececec;font-weight:bold;transform:scaleX(1.022);">-6.47 dBm</div>
<div class="t" style="left:554.00px;top:535px;font-size:12.61px;line-height:12.61px;color:#e0e0e0;">TOI (min)</div>
<div class="t" style="left:772.00px;top:535px;font-size:12.32px;line-height:12.32px;color:#e0e0e0;transform:scaleX(0.929);">16.530 dBm</div>
<div class="r" style="left:96px;top:533px;width:792px;height:1px;background:#8a8a8a;"></div>
<div class="r" style="left:467px;top:336px;width:49.5px;height:9.5px;background:rgba(150,152,160,0.30);box-shadow:inset 0 0 0 1px rgba(190,190,200,0.15);"></div>
<div class="r" style="left:469px;top:341.5px;width:45px;height:1.2px;background:repeating-linear-gradient(90deg,rgba(225,225,230,0.5) 0 1.5px,transparent 1.5px 3.6px);"></div>
<div class="r" style="left:467px;top:450px;width:49.5px;height:12.5px;background:rgba(150,152,160,0.30);box-shadow:inset 0 0 0 1px rgba(190,190,200,0.15);"></div>
<div class="r" style="left:469px;top:456px;width:45px;height:1.2px;background:repeating-linear-gradient(90deg,rgba(225,225,230,0.5) 0 1.5px,transparent 1.5px 3.6px);"></div>
<div class="r" style="left:468px;top:459px;width:48px;height:2px;background:rgba(200,200,205,0.35);"></div>
</body></html>
